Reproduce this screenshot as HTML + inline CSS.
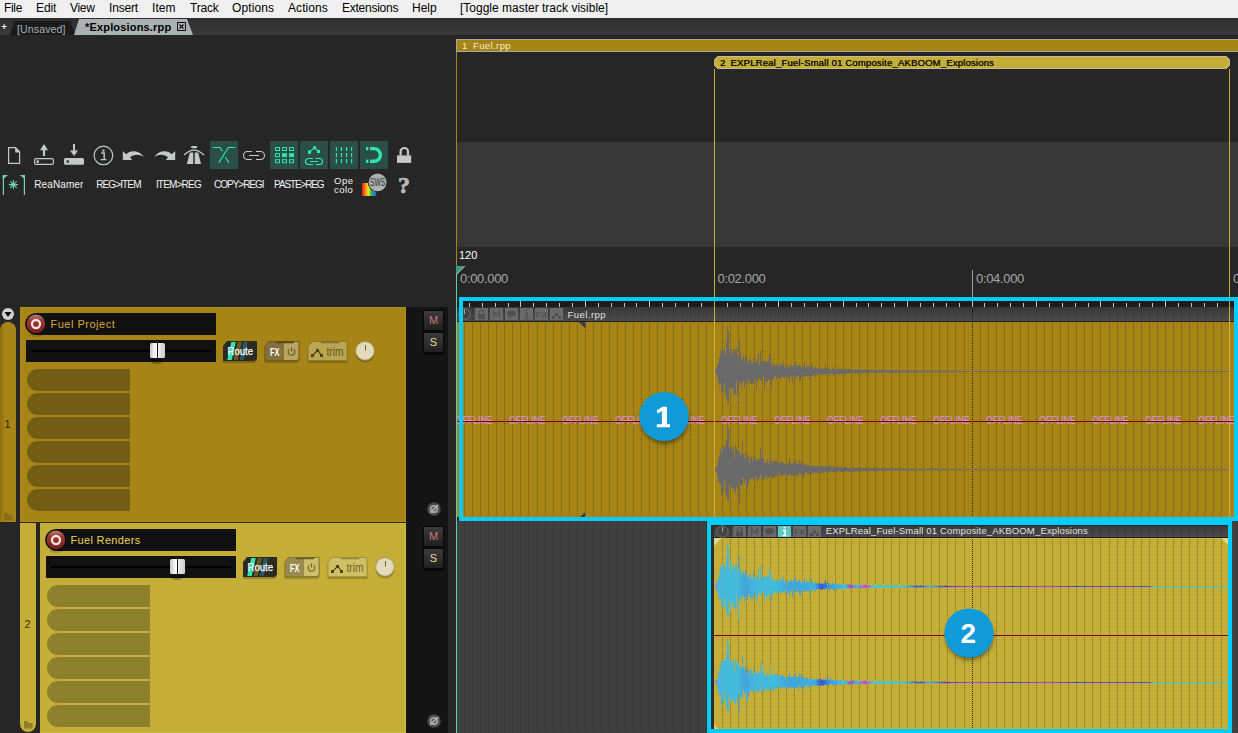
<!DOCTYPE html>
<html><head><meta charset="utf-8"><title>REAPER</title>
<style>
html,body{margin:0;padding:0;}
body{width:1238px;height:733px;overflow:hidden;background:#262626;position:relative;font-family:"Liberation Sans",sans-serif;}
.a{position:absolute;}
.menubar{left:0;top:0;width:1238px;height:18px;background:#f0f0f0;}
.menubar span{position:absolute;top:1px;font-size:12px;line-height:14px;color:#000;white-space:nowrap;}
.tabbar{left:0;top:18px;width:1238px;height:17px;background:linear-gradient(#2e2e2e,#3a3a3a);}
.tbl{position:absolute;color:#f2f2f2;font-size:10px;line-height:11px;white-space:nowrap;text-align:center;}
.slot{position:absolute;width:103px;height:22px;border-radius:11px 0 0 11px;}
.t1 .slot{background:#735c14;}
.t2 .slot{background:#8e7f2c;}
.box{position:absolute;background:#111;}
.btnms{position:absolute;width:21px;height:21px;background:linear-gradient(#3c3c3c,#202020);border:1px solid #080808;box-sizing:border-box;font-size:11px;line-height:19px;text-align:center;box-shadow:0 2px 0 #080808;}
.ico{position:absolute;width:13px;height:12px;background:#6a6a6a;}
</style></head><body>
<div class="a menubar"><span style="left:4px;letter-spacing:-0.32px">File</span><span style="left:36px;letter-spacing:-0.12px">Edit</span><span style="left:70px;letter-spacing:-0.3px">View</span><span style="left:109px;letter-spacing:-0.18px">Insert</span><span style="left:152px;letter-spacing:0.07px">Item</span><span style="left:190px;letter-spacing:-0.2px">Track</span><span style="left:232px;letter-spacing:0.11px">Options</span><span style="left:288px;letter-spacing:0.07px">Actions</span><span style="left:342px;letter-spacing:-0.25px">Extensions</span><span style="left:412px;letter-spacing:0px">Help</span><span style="left:460px;letter-spacing:0px">[Toggle master track visible]</span></div><div class="a tabbar"></div><div class="a" style="left:1.500px;top:21px;color:#fff;font-size:9px;line-height:12px;font-weight:bold">+</div><svg class="a" style="left:0;top:18px" width="200" height="17"><polygon points="9.500,17 15,3 70,3 75.500,17" fill="#1b1b1b"/><polygon points="74,17 79,1 187,1 193,17" fill="#a9b1b1"/><rect x="177.5" y="4.5" width="8" height="8" fill="none" stroke="#111" stroke-width="1"/><path d="M179.5 6.5l4 4M183.5 6.5l-4 4" stroke="#111" stroke-width="1.2"/></svg><div class="a" id="tab1" style="left:17px;top:23px;color:#a6b2ba;font-size:10.500px;letter-spacing:0.150px;line-height:12px;white-space:nowrap">[Unsaved]</div><div class="a" id="tab2" style="left:85px;top:21px;color:#000;font-size:11px;line-height:12px;font-weight:bold;white-space:nowrap;letter-spacing:0.170px">*Explosions.rpp</div><svg class="a" style="left:0;top:140px" width="420" height="60" viewBox="0 0 420 60"><path d="M8.600 7.600h7l4 4.200v11.600h-11z" fill="none" stroke="#c3c9c7" stroke-width="1.200"/><path d="M15.200 7.400v5h4.800z" fill="#c3c9c7"/><rect x="34.600" y="18.600" width="18.800" height="5.800" rx="1.500" fill="none" stroke="#c3c9c7" stroke-width="1.200"/><rect x="36.500" y="20.400" width="2.500" height="2.400" fill="#c3c9c7"/><path d="M44 16V9.500" stroke="#c3c9c7" stroke-width="2.200"/><path d="M40 10.300l4-6.300 4 6.300z" fill="#c3c9c7"/><rect x="64" y="18" width="20" height="6.800" rx="1.500" fill="#c3c9c7"/><rect x="66.500" y="20.300" width="2.500" height="2.400" fill="#3a3a3a"/><path d="M74 4v7.500" stroke="#c3c9c7" stroke-width="2"/><path d="M70 10.600l4 5.400 4-5.400z" fill="#c3c9c7"/><circle cx="103.400" cy="15.400" r="9.300" fill="none" stroke="#c3c9c7" stroke-width="1.200"/><path d="M101.300 13h2.900v6.500M100.600 19.600h5.800" fill="none" stroke="#c3c9c7" stroke-width="1.400"/><rect x="102.400" y="9.600" width="2.100" height="2.100" fill="#c3c9c7"/><path d="M122.800 11L126.200 14.200C130 10.300 138 9.300 144 17C139 13.800 133.500 14 130 17.200L132.200 20L122.800 20Z" fill="#c3c9c7"/><path d="M122.800 11L126.200 14.200C130 10.300 138 9.300 144 17C139 13.800 133.500 14 130 17.200L132.200 20L122.800 20Z" fill="#c3c9c7" transform="translate(298,0) scale(-1,1)"/><path d="M184 15Q194 5.200 204 15" fill="none" stroke="#c3c9c7" stroke-width="1.300"/><path d="M189.800 12.600h8.400l2.800 11.400h-14.100z" fill="#c3c9c7"/><rect x="193.300" y="12" width="1.400" height="12" fill="#1a1a1a"/><rect x="191.300" y="6" width="5.700" height="2.200" rx="0.500" fill="#c3c9c7"/><rect x="210" y="1" width="28" height="28" fill="#2b4f45"/><path d="M213 7.500H220L222.400 11.300M225.200 17L229 22.900M235 7.500H228.400L218.700 22.900" fill="none" stroke="#2de6b0" stroke-width="1.100"/><path d="M251.800 11.500H247.500a4 4 0 0 0 0 8H251.800M256 11.500H260.500a4 4 0 0 1 0 8H256M249 15.500H259" fill="none" stroke="#c8c8c8" stroke-width="1.100"/><rect x="270" y="1" width="28" height="28" fill="#2b4f45"/><rect x="275.5" y="7.5" width="4" height="3" fill="none" stroke="#2de6b0" stroke-width="1"/><rect x="282.5" y="7.5" width="4" height="3" fill="none" stroke="#2de6b0" stroke-width="1"/><rect x="289.5" y="7.5" width="4" height="3" fill="none" stroke="#2de6b0" stroke-width="1"/><rect x="275.5" y="13.6" width="4" height="3" fill="none" stroke="#2de6b0" stroke-width="1"/><rect x="282" y="13.1" width="5" height="4" fill="#2de6b0"/><rect x="289" y="13.1" width="5" height="4" fill="#2de6b0"/><rect x="275.5" y="19.7" width="4" height="3" fill="none" stroke="#2de6b0" stroke-width="1"/><rect x="282.5" y="19.7" width="4" height="3" fill="none" stroke="#2de6b0" stroke-width="1"/><rect x="289.5" y="19.7" width="4" height="3" fill="none" stroke="#2de6b0" stroke-width="1"/><rect x="300" y="1" width="28" height="28" fill="#2b4f45"/><path d="M309.500 12l5-4.300 4 3.800" fill="none" stroke="#2de6b0" stroke-width="1.100"/><rect x="308" y="10.400" width="3" height="3.500" fill="#2de6b0"/><rect x="313.100" y="6.200" width="3" height="3.200" fill="#2de6b0"/><rect x="317" y="9.900" width="3" height="3.200" fill="#2de6b0"/><path d="M313 18.500H308.500a3 3 0 0 0 0 6H313M315.700 18.500H319.500a3 3 0 0 1 0 6H315.700M310 21.500H318" fill="none" stroke="#2de6b0" stroke-width="1.100"/><rect x="330" y="1" width="28" height="28" fill="#2b4f45"/><path d="M336.4 6.900v16.400" stroke="#2de6b0" stroke-width="1.200" stroke-dasharray="4.200 1.900"/><path d="M341.47 6.900v16.400" stroke="#2de6b0" stroke-width="1.200" stroke-dasharray="4.200 1.900"/><path d="M346.54 6.900v16.400" stroke="#2de6b0" stroke-width="1.200" stroke-dasharray="4.200 1.900"/><path d="M351.61 6.900v16.400" stroke="#2de6b0" stroke-width="1.200" stroke-dasharray="4.200 1.900"/><rect x="360" y="1" width="28" height="28" fill="#2b4f45"/><path d="M370 8.600H374A6.350 6.350 0 0 1 374 21.300H370" fill="none" stroke="#2de6b0" stroke-width="3.400"/><rect x="366" y="6.900" width="2.300" height="3.400" fill="#2de6b0"/><rect x="366" y="19.600" width="2.300" height="3.400" fill="#2de6b0"/><rect x="397" y="15.400" width="14.200" height="7.500" fill="#c3c9c7"/><path d="M400.600 15.500V11.700A3.700 3.700 0 0 1 408 11.700V15.500" fill="none" stroke="#c3c9c7" stroke-width="2.200"/><path d="M3.400 55v-20M24.400 55v-20" stroke="#6fd6b4" stroke-width="1.200"/><path d="M2.800 35h5.200l-5.200 4.200zM25 35h-5.200l5.200 4.200z" fill="#6fd6b4"/><path d="M13.400 40v9.200M8.800 44.600h9.200M10.200 41.400l6.400 6.400M16.600 41.400l-6.400 6.400" stroke="#6fd6b4" stroke-width="1.100"/><circle cx="13.400" cy="44.600" r="1.800" fill="#6fd6b4"/><defs><linearGradient id="rb" x1="0" x2="1" y1="0" y2="0"><stop offset="0" stop-color="#e81818"/><stop offset="0.250" stop-color="#f89018"/><stop offset="0.450" stop-color="#f0e828"/><stop offset="0.650" stop-color="#30c040"/><stop offset="0.850" stop-color="#2088e8"/><stop offset="1" stop-color="#2858d8"/></linearGradient></defs><rect x="362" y="43" width="14.200" height="13" fill="url(#rb)"/><circle cx="377.600" cy="42.400" r="9.800" fill="#262626"/><circle cx="377.600" cy="42.400" r="8.900" fill="#adb1b1"/><text x="377.600" y="46" font-size="10" text-anchor="middle" fill="#2c2c2c" font-family="Liberation Sans,sans-serif" textLength="15" lengthAdjust="spacingAndGlyphs">SWS</text><text x="404" y="53" font-size="24" font-weight="bold" text-anchor="middle" fill="#b9b9b9" stroke="#b9b9b9" stroke-width="0.700" font-family="Liberation Serif,serif">?</text></svg><div class="tbl" style="left:34.2px;top:179px;font-size:10px;letter-spacing:0.119px;text-align:left">ReaNamer</div><div class="tbl" style="left:96.2px;top:179px;font-size:10px;letter-spacing:-0.875px;text-align:left">REG&gt;ITEM</div><div class="tbl" style="left:155.9px;top:179px;font-size:10px;letter-spacing:-0.800px;text-align:left">ITEM&gt;REG</div><div class="tbl" style="left:214.1px;top:179px;font-size:10px;letter-spacing:-1.025px;text-align:left">COPY&gt;REGI</div><div class="tbl" style="left:274.1px;top:179px;font-size:10px;letter-spacing:-1.128px;text-align:left">PASTE&gt;REG</div><div class="tbl" style="left:334px;top:175.500px;font-size:9.500px;line-height:9px;text-align:left;letter-spacing:0.493px">Ope<br>colo</div><div class="a" style="left:457px;top:142px;width:781px;height:105px;background:#383838"></div><div class="a" style="left:456px;top:39px;width:782px;height:13px;background:#a68416;border:1px solid #a8a8a0;border-right:none;box-sizing:border-box"></div><div class="a" style="left:462px;top:39.500px;font-size:9.500px;line-height:11px;color:#f6eecb;white-space:pre;letter-spacing:0.403px">1<span style="word-spacing:2.200px"> </span>Fuel.rpp</div><div class="a" style="left:456px;top:52px;width:1px;height:215px;background:#a68416"></div><svg class="a" style="left:713px;top:55px" width="520" height="16"><polygon points="1.500,4.500 4.500,1.500 513.500,1.500 516.500,4.500 516.500,10.500 513.500,13.500 4.500,13.500 1.500,10.500" fill="#c4ae38" stroke="#c2bd98" stroke-width="1"/></svg><div class="a" style="left:720px;top:56.500px;font-size:9.500px;line-height:11px;color:#120e00;white-space:pre;letter-spacing:0.190px;text-shadow:0.3px 0 0 #120e00">2<span style="word-spacing:2.200px"> </span>EXPLReal_Fuel-Small 01 Composite_AKBOOM_Explosions</div><div class="a" style="left:714px;top:69px;width:1px;height:228px;background:#c4ae38"></div><div class="a" style="left:1229px;top:69px;width:1px;height:228px;background:#c4ae38"></div><div class="a" style="left:459px;top:250px;font-size:11px;line-height:11px;color:#fff">120</div><div class="a" style="left:460px;top:272px;font-size:13px;line-height:14px;color:#a6a6a6;white-space:nowrap;letter-spacing:-0.325px">0:00.000</div><div class="a" style="left:717.5px;top:272px;font-size:13px;line-height:14px;color:#a6a6a6;white-space:nowrap;letter-spacing:-0.325px">0:02.000</div><div class="a" style="left:976px;top:272px;font-size:13px;line-height:14px;color:#a6a6a6;white-space:nowrap;letter-spacing:-0.325px">0:04.000</div><div class="a" style="left:1233px;top:272px;font-size:13px;line-height:14px;color:#a6a6a6;white-space:nowrap;letter-spacing:-0.325px">0:06.000</div><div class="a" style="left:972px;top:270px;width:1px;height:28px;background:#a0a0a0"></div><div class="a" style="left:456px;top:266px;width:1px;height:467px;background:#5fd0b0"></div><svg class="a" style="left:456px;top:266px" width="10" height="10"><polygon points="0,0 9,0 0,9" fill="#3d9a80"/><path d="M9 0L0 9" stroke="#c8d8d0" stroke-width="0.800"/></svg><svg class="a" style="left:0;top:0" width="1238" height="733" viewBox="0 0 1238 733"><defs><linearGradient id="wv" gradientUnits="userSpaceOnUse" x1="715" x2="1228" y1="0" y2="0"><stop offset="0.0000" stop-color="#a070e0"/><stop offset="0.0058" stop-color="#48b8dc"/><stop offset="0.0429" stop-color="#44bcd8"/><stop offset="0.0585" stop-color="#43a4dc"/><stop offset="0.0780" stop-color="#44b8dc"/><stop offset="0.1170" stop-color="#40bcdc"/><stop offset="0.1462" stop-color="#40a4dc"/><stop offset="0.1949" stop-color="#3cb0e0"/><stop offset="0.2066" stop-color="#3058dc"/><stop offset="0.2261" stop-color="#38a0e0"/><stop offset="0.2534" stop-color="#40c4dc"/><stop offset="0.2651" stop-color="#a048d8"/><stop offset="0.2768" stop-color="#40c0dc"/><stop offset="0.2924" stop-color="#d040d8"/><stop offset="0.3080" stop-color="#40c8d8"/><stop offset="0.3704" stop-color="#38c8d8"/><stop offset="0.3996" stop-color="#4848d8"/><stop offset="0.4191" stop-color="#38c0d8"/><stop offset="0.4483" stop-color="#5040d8"/><stop offset="0.5068" stop-color="#c040d0"/><stop offset="0.5848" stop-color="#4848d8"/><stop offset="0.6433" stop-color="#c040d0"/><stop offset="0.7018" stop-color="#4848d8"/><stop offset="0.7797" stop-color="#7050d4"/><stop offset="0.8421" stop-color="#5050d8"/><stop offset="0.8577" stop-color="#38d0d0"/><stop offset="1.0000" stop-color="#38d0d0"/></linearGradient></defs><rect x="457" y="297" width="781" height="10" fill="#262626"/><rect x="457" y="301" width="781" height="6" fill="#1c1c1c"/><linearGradient id="hg1" x1="0" x2="0" y1="0" y2="1"><stop offset="0" stop-color="#383838"/><stop offset="1" stop-color="#4c4c4c"/></linearGradient><rect x="457" y="307" width="777" height="14" fill="url(#hg1)"/><rect x="457" y="321" width="777" height="1" fill="#1c1c22"/><rect x="457" y="322" width="777" height="195" fill="#a68416"/><rect x="457" y="516" width="777" height="1" fill="#b4860e"/><rect x="457" y="521" width="781" height="212" fill="#404040"/><rect x="711" y="525" width="3" height="204" fill="#2e2c2c"/><rect x="714" y="525" width="514" height="12" fill="url(#hg1)"/><rect x="714" y="525" width="514" height="1" fill="#2a2424"/><rect x="714" y="537" width="514" height="1" fill="#1c1c22"/><rect x="714" y="538" width="514" height="191" fill="#c4ae38"/><rect x="714" y="538" width="514" height="1" fill="#ccb63e"/><g shape-rendering="crispEdges" fill="none" stroke-width="1" stroke-dasharray="1 1"><path d="M464.5 307V321M472.5 307V321M480.5 307V321M488.5 307V321M496.5 307V321M504.5 307V321M512.5 307V321M520.5 307V321M528.5 307V321M537.5 307V321M545.5 307V321M553.5 307V321M561.5 307V321M569.5 307V321M577.5 307V321M585.5 307V321M593.5 307V321M601.5 307V321M609.5 307V321M617.5 307V321M625.5 307V321M633.5 307V321M641.5 307V321M649.5 307V321M657.5 307V321M665.5 307V321M673.5 307V321M682.5 307V321M690.5 307V321M698.5 307V321M706.5 307V321M722.5 307V321M730.5 307V321M738.5 307V321M746.5 307V321M754.5 307V321M762.5 307V321M770.5 307V321M778.5 307V321M786.5 307V321M794.5 307V321M802.5 307V321M810.5 307V321M819.5 307V321M827.5 307V321M835.5 307V321M843.5 307V321M851.5 307V321M859.5 307V321M867.5 307V321M875.5 307V321M883.5 307V321M891.5 307V321M899.5 307V321M907.5 307V321M915.5 307V321M923.5 307V321M931.5 307V321M939.5 307V321M947.5 307V321M955.5 307V321M964.5 307V321M980.5 307V321M988.5 307V321M996.5 307V321M1004.5 307V321M1012.5 307V321M1020.5 307V321M1028.5 307V321M1036.5 307V321M1044.5 307V321M1052.5 307V321M1060.5 307V321M1068.5 307V321M1076.5 307V321M1084.5 307V321M1092.5 307V321M1100.5 307V321M1109.5 307V321M1117.5 307V321M1125.5 307V321M1133.5 307V321M1141.5 307V321M1149.5 307V321M1157.5 307V321M1165.5 307V321M1173.5 307V321M1181.5 307V321M1189.5 307V321M1197.5 307V321M1205.5 307V321M1213.5 307V321M1221.5 307V321" stroke="#343434"/><path d="M464.5 323V517M472.5 323V517M480.5 323V517M488.5 323V517M496.5 323V517M504.5 323V517M512.5 323V517M520.5 323V517M528.5 323V517M537.5 323V517M545.5 323V517M553.5 323V517M561.5 323V517M569.5 323V517M577.5 323V517M585.5 323V517M593.5 323V517M601.5 323V517M609.5 323V517M617.5 323V517M625.5 323V517M633.5 323V517M641.5 323V517M649.5 323V517M657.5 323V517M665.5 323V517M673.5 323V517M682.5 323V517M690.5 323V517M698.5 323V517M706.5 323V517M722.5 323V517M730.5 323V517M738.5 323V517M746.5 323V517M754.5 323V517M762.5 323V517M770.5 323V517M778.5 323V517M786.5 323V517M794.5 323V517M802.5 323V517M810.5 323V517M819.5 323V517M827.5 323V517M835.5 323V517M843.5 323V517M851.5 323V517M859.5 323V517M867.5 323V517M875.5 323V517M883.5 323V517M891.5 323V517M899.5 323V517M907.5 323V517M915.5 323V517M923.5 323V517M931.5 323V517M939.5 323V517M947.5 323V517M955.5 323V517M964.5 323V517M980.5 323V517M988.5 323V517M996.5 323V517M1004.5 323V517M1012.5 323V517M1020.5 323V517M1028.5 323V517M1036.5 323V517M1044.5 323V517M1052.5 323V517M1060.5 323V517M1068.5 323V517M1076.5 323V517M1084.5 323V517M1092.5 323V517M1100.5 323V517M1109.5 323V517M1117.5 323V517M1125.5 323V517M1133.5 323V517M1141.5 323V517M1149.5 323V517M1157.5 323V517M1165.5 323V517M1173.5 323V517M1181.5 323V517M1189.5 323V517M1197.5 323V517M1205.5 323V517M1213.5 323V517M1221.5 323V517" stroke="#695410"/><path d="M464.5 521V733M472.5 521V733M480.5 521V733M488.5 521V733M496.5 521V733M504.5 521V733M512.5 521V733M520.5 521V733M528.5 521V733M537.5 521V733M545.5 521V733M553.5 521V733M561.5 521V733M569.5 521V733M577.5 521V733M585.5 521V733M593.5 521V733M601.5 521V733M609.5 521V733M617.5 521V733M625.5 521V733M633.5 521V733M641.5 521V733M649.5 521V733M657.5 521V733M665.5 521V733M673.5 521V733M682.5 521V733M690.5 521V733M698.5 521V733M706.5 521V733M1237.5 521V733" stroke="#2c2c2c"/><path d="M722.5 525V537M730.5 525V537M738.5 525V537M746.5 525V537M754.5 525V537M762.5 525V537M770.5 525V537M778.5 525V537M786.5 525V537M794.5 525V537M802.5 525V537M810.5 525V537M819.5 525V537M827.5 525V537M835.5 525V537M843.5 525V537M851.5 525V537M859.5 525V537M867.5 525V537M875.5 525V537M883.5 525V537M891.5 525V537M899.5 525V537M907.5 525V537M915.5 525V537M923.5 525V537M931.5 525V537M939.5 525V537M947.5 525V537M955.5 525V537M964.5 525V537M980.5 525V537M988.5 525V537M996.5 525V537M1004.5 525V537M1012.5 525V537M1020.5 525V537M1028.5 525V537M1036.5 525V537M1044.5 525V537M1052.5 525V537M1060.5 525V537M1068.5 525V537M1076.5 525V537M1084.5 525V537M1092.5 525V537M1100.5 525V537M1109.5 525V537M1117.5 525V537M1125.5 525V537M1133.5 525V537M1141.5 525V537M1149.5 525V537M1157.5 525V537M1165.5 525V537M1173.5 525V537M1181.5 525V537M1189.5 525V537M1197.5 525V537M1205.5 525V537M1213.5 525V537M1221.5 525V537" stroke="#2c2c2c"/><path d="M722.5 539V729M730.5 539V729M738.5 539V729M746.5 539V729M754.5 539V729M762.5 539V729M770.5 539V729M778.5 539V729M786.5 539V729M794.5 539V729M802.5 539V729M810.5 539V729M819.5 539V729M827.5 539V729M835.5 539V729M843.5 539V729M851.5 539V729M859.5 539V729M867.5 539V729M875.5 539V729M883.5 539V729M891.5 539V729M899.5 539V729M907.5 539V729M915.5 539V729M923.5 539V729M931.5 539V729M939.5 539V729M947.5 539V729M955.5 539V729M964.5 539V729M980.5 539V729M988.5 539V729M996.5 539V729M1004.5 539V729M1012.5 539V729M1020.5 539V729M1028.5 539V729M1036.5 539V729M1044.5 539V729M1052.5 539V729M1060.5 539V729M1068.5 539V729M1076.5 539V729M1084.5 539V729M1092.5 539V729M1100.5 539V729M1109.5 539V729M1117.5 539V729M1125.5 539V729M1133.5 539V729M1141.5 539V729M1149.5 539V729M1157.5 539V729M1165.5 539V729M1173.5 539V729M1181.5 539V729M1189.5 539V729M1197.5 539V729M1205.5 539V729M1213.5 539V729M1221.5 539V729" stroke="#796b1f"/><path d="M972.500 307V320M972.500 525V537" stroke="#161616"/><path d="M972.500 323V517" stroke="#2a2004"/><path d="M972.500 539V729" stroke="#2c2808"/></g><rect x="469" y="303" width="1" height="4" fill="#c4c4c4"/><rect x="482" y="303" width="1" height="4" fill="#c4c4c4"/><rect x="495" y="303" width="1" height="4" fill="#c4c4c4"/><rect x="508" y="303" width="1" height="4" fill="#c4c4c4"/><rect x="520" y="301" width="1" height="6" fill="#c4c4c4"/><rect x="533" y="303" width="1" height="4" fill="#c4c4c4"/><rect x="546" y="303" width="1" height="4" fill="#c4c4c4"/><rect x="559" y="303" width="1" height="4" fill="#c4c4c4"/><rect x="572" y="303" width="1" height="4" fill="#c4c4c4"/><rect x="585" y="301" width="1" height="6" fill="#c4c4c4"/><rect x="598" y="303" width="1" height="4" fill="#c4c4c4"/><rect x="611" y="303" width="1" height="4" fill="#c4c4c4"/><rect x="624" y="303" width="1" height="4" fill="#c4c4c4"/><rect x="636" y="303" width="1" height="4" fill="#c4c4c4"/><rect x="649" y="301" width="1" height="6" fill="#c4c4c4"/><rect x="662" y="303" width="1" height="4" fill="#c4c4c4"/><rect x="675" y="303" width="1" height="4" fill="#c4c4c4"/><rect x="688" y="303" width="1" height="4" fill="#c4c4c4"/><rect x="701" y="303" width="1" height="4" fill="#c4c4c4"/><rect x="714" y="301" width="1" height="6" fill="#c4c4c4"/><rect x="727" y="303" width="1" height="4" fill="#c4c4c4"/><rect x="740" y="303" width="1" height="4" fill="#c4c4c4"/><rect x="752" y="303" width="1" height="4" fill="#c4c4c4"/><rect x="765" y="303" width="1" height="4" fill="#c4c4c4"/><rect x="778" y="301" width="1" height="6" fill="#c4c4c4"/><rect x="791" y="303" width="1" height="4" fill="#c4c4c4"/><rect x="804" y="303" width="1" height="4" fill="#c4c4c4"/><rect x="817" y="303" width="1" height="4" fill="#c4c4c4"/><rect x="830" y="303" width="1" height="4" fill="#c4c4c4"/><rect x="843" y="301" width="1" height="6" fill="#c4c4c4"/><rect x="856" y="303" width="1" height="4" fill="#c4c4c4"/><rect x="868" y="303" width="1" height="4" fill="#c4c4c4"/><rect x="881" y="303" width="1" height="4" fill="#c4c4c4"/><rect x="894" y="303" width="1" height="4" fill="#c4c4c4"/><rect x="907" y="301" width="1" height="6" fill="#c4c4c4"/><rect x="920" y="303" width="1" height="4" fill="#c4c4c4"/><rect x="933" y="303" width="1" height="4" fill="#c4c4c4"/><rect x="946" y="303" width="1" height="4" fill="#c4c4c4"/><rect x="959" y="303" width="1" height="4" fill="#c4c4c4"/><rect x="972" y="301" width="1" height="6" fill="#c4c4c4"/><rect x="984" y="303" width="1" height="4" fill="#c4c4c4"/><rect x="997" y="303" width="1" height="4" fill="#c4c4c4"/><rect x="1010" y="303" width="1" height="4" fill="#c4c4c4"/><rect x="1023" y="303" width="1" height="4" fill="#c4c4c4"/><rect x="1036" y="301" width="1" height="6" fill="#c4c4c4"/><rect x="1049" y="303" width="1" height="4" fill="#c4c4c4"/><rect x="1062" y="303" width="1" height="4" fill="#c4c4c4"/><rect x="1075" y="303" width="1" height="4" fill="#c4c4c4"/><rect x="1088" y="303" width="1" height="4" fill="#c4c4c4"/><rect x="1100" y="301" width="1" height="6" fill="#c4c4c4"/><rect x="1113" y="303" width="1" height="4" fill="#c4c4c4"/><rect x="1126" y="303" width="1" height="4" fill="#c4c4c4"/><rect x="1139" y="303" width="1" height="4" fill="#c4c4c4"/><rect x="1152" y="303" width="1" height="4" fill="#c4c4c4"/><rect x="1165" y="301" width="1" height="6" fill="#c4c4c4"/><rect x="1178" y="303" width="1" height="4" fill="#c4c4c4"/><rect x="1191" y="303" width="1" height="4" fill="#c4c4c4"/><rect x="1204" y="303" width="1" height="4" fill="#c4c4c4"/><rect x="1217" y="303" width="1" height="4" fill="#c4c4c4"/><rect x="1229" y="301" width="1" height="6" fill="#c4c4c4"/><rect x="714" y="297" width="1" height="220" fill="#c8ae3c"/><rect x="1229" y="297" width="1" height="220" fill="#c8ae3c"/><path d="M715 369.9V369.9H716V367.8H717V365.6H718V362.8H719V358H720V350.1H721V353H722V347.9H723V350.1H724V349.7H725V354.9H726V341.5H727V326.5H728V330.5H729V351.9H730V346.5H731V349.2H732V355.1H733V349.5H734V352.6H735V349.5H736V347.9H737V355.4H738V353.3H739V339.7H740V353.7H741V361.8H742V357.2H743V356H744V359.7H745V355.4H746V357.4H747V360.8H748V363.4H749V358.8H750V360H751V362.9H752V362.7H753V358H754V364H755V359.7H756V362.5H757V361H758V353.3H759V365.2H760V350.5H761V361.2H762V365.9H763V360.1H764V361.2H765V361.4H766V361.2H767V360.9H768V361.2H769V353.6H770V355.5H771V362.9H772V366.8H773V362.9H774V365.2H775V365.7H776V364.6H777V366H778V363.4H779V366.7H780V364.3H781V365.3H782V364.8H783V361.3H784V367.8H785V364.5H786V368H787V367.8H788V365.1H789V366.9H790V365.1H791V365.2H792V366.2H793V365.3H794V364.8H795V361.5H796V367.2H797V365.6H798V365.2H799V365.4H800V366.4H801V368.4H802V366.1H803V366.3H804V363.4H805V367.7H806V366.4H807V366.5H808V366.3H809V367.3H810V367.4H811V363.5H812V366.8H813V368.8H814V367.8H815V367.1H816V368.6H817V367.8H818V368.1H819V368.3H820V369H821V368.2H822V368.9H823V368.8H824V367.7H825V364.9H826V368.2H827V369.9H828V368.1H829V368.8H830V369.9H831V369.5H832V367.2H833V369H834V369H835V368.6H836V369.2H837V370.2H838V368.7H839V369.2H840V368.8H841V369.4H842V369H843V370.1H844V369.2H845V369.2H846V369.3H847V369.4H848V369H849V369.3H850V369.1H851V369.5H852V369.9H853V370.4H854V369.8H855V370H856V369.7H857V369.4H858V369.4H859V369.6H860V369.8H861V370.5H862V370.3H863V370.3H864V369.8H865V369.6H866V369.9H867V370.1H868V369.9H869V370.2H870V370.2H871V370.3H872V370.4H873V370.2H874V369.9H875V369.7H876V370.6H877V370.2H878V369.8H879V370.1H880V370H881V369.8H882V370.1H883V370.1H884V370.5H885V370.2H886V370.3H887V370.3H888V370.2H889V370.1H890V370H891V370.1H892V370.6H893V370.1H894V370.4H895V370.2H896V370.3H897V370.2H898V370.5H899V370.1H900V370.8H901V370.5H902V370.3H903V370.3H904V370.7H905V370.4H906V370.5H907V370.6H908V370.3H909V370.8H910V370.3H911V370.3H912V370.5H913V370.3H914V370.4H915V370.6H916V370.3H917V370.5H918V370.8H919V370.8H920V370.5H921V370.4H922V370.4H923V370.7H924V370.8H925V370.4H926V370.7H927V370.6H928V370.6H929V370.4H930V370.4H931V370.4H932V370.4H933V370.7H934V370.4H935V370.7H936V370.7H937V370.7H938V370.8H939V370.5H940V370.5H941V370.8H942V370.5H943V371H944V370.7H945V370.5H946V370.6H947V370.7H948V371H949V370.7H950V371H951V371H952V370.8H953V371H954V370.9H955V370.9H956V370.8H957V370.9H958V370.9H959V370.8H960V370.9H961V370.9H962V370.9H963V370.9H964V371H965V370.9H966V371H967V371H968V371H969V371H970V371H971V371H972V371H973V371H974V371H975V371H976V371H977V371H978V371H979V371H980V371H981V371H982V371H983V370.9H984V371H985V370.9H986V371H987V371H988V371H989V371H990V371H991V371H992V371H993V371H994V371H995V371H996V371H997V371H998V370.9H999V371H1000V371H1001V371H1002V371H1003V370.9H1004V371H1005V371H1006V371H1007V370.9H1008V370.9H1009V371H1010V370.9H1011V371H1012V371H1013V371H1014V371H1015V371H1016V371H1017V371H1018V371H1019V371H1020V371H1021V371H1022V371H1023V371H1024V371H1025V371H1026V371H1027V371H1028V371H1029V371H1030V371H1031V371H1032V370.9H1033V371H1034V371H1035V371H1036V371H1037V371H1038V371H1039V371H1040V371H1041V371H1042V370.9H1043V371H1044V371H1045V371H1046V371H1047V371H1048V370.9H1049V371H1050V371H1051V371H1052V371H1053V371H1054V371H1055V371H1056V371H1057V371H1058V371H1059V370.9H1060V371H1061V371H1062V371H1063V371H1064V371H1065V371H1066V371H1067V371H1068V371H1069V371H1070V371H1071V371H1072V371H1073V371H1074V371H1075V371H1076V371H1077V371H1078V371H1079V370.9H1080V371H1081V371H1082V371H1083V371H1084V371H1085V371H1086V371H1087V371H1088V371H1089V371H1090V371H1091V371H1092V371H1093V371H1094V371H1095V371H1096V371H1097V371H1098V371H1099V371H1100V371H1101V371H1102V371H1103V371H1104V371H1105V371H1106V371H1107V371H1108V371H1109V371H1110V371H1111V371H1112V371H1113V371H1114V371H1115V371H1116V371H1117V371H1118V371H1119V371H1120V371H1121V371H1122V371H1123V371H1124V371H1125V371H1126V371H1127V371H1128V371H1129V371H1130V371H1131V371H1132V371H1133V371H1134V371H1135V371H1136V371H1137V371H1138V371H1139V371H1140V371H1141V371H1142V371H1143V371H1144V371H1145V371H1146V371H1147V371H1148V371H1149V371H1150V371H1151V371H1152V371H1153V371H1154V371H1155V371H1156V371H1157V371H1158V371H1159V371H1160V371H1161V371H1162V371H1163V371H1164V371H1165V371H1166V371H1167V371H1168V371H1169V371H1170V371H1171V371H1172V371H1173V371H1174V371H1175V371H1176V371H1177V371H1178V371H1179V371H1180V371H1181V371H1182V371H1183V371H1184V371H1185V371H1186V371H1187V371H1188V371H1189V371H1190V371H1191V371H1192V371H1193V371H1194V371H1195V371H1196V371H1197V371H1198V371H1199V371H1200V371H1201V371H1202V371H1203V371H1204V371H1205V371H1206V371H1207V371H1208V371H1209V371H1210V371H1211V371H1212V371H1213V371H1214V371H1215V371H1216V371H1217V371H1218V371H1219V371H1220V371H1221V371H1222V371H1223V371H1224V371H1225V371H1226V371H1227V371H1228V371H1229V372H1228V372H1227V372H1226V372H1225V372H1224V372H1223V372H1222V372H1221V372H1220V372H1219V372H1218V372H1217V372H1216V372H1215V372H1214V372H1213V372H1212V372H1211V372H1210V372H1209V372H1208V372H1207V372H1206V372H1205V372H1204V372H1203V372H1202V372H1201V372H1200V372H1199V372H1198V372H1197V372H1196V372H1195V372H1194V372H1193V372H1192V372H1191V372H1190V372H1189V372H1188V372H1187V372H1186V372H1185V372H1184V372H1183V372H1182V372H1181V372H1180V372H1179V372H1178V372H1177V372H1176V372H1175V372H1174V372H1173V372H1172V372H1171V372H1170V372H1169V372H1168V372H1167V372H1166V372H1165V372H1164V372H1163V372H1162V372H1161V372H1160V372H1159V372H1158V372H1157V372H1156V372H1155V372H1154V372H1153V372H1152V372H1151V372H1150V372H1149V372H1148V372H1147V372H1146V372H1145V372H1144V372H1143V372H1142V372H1141V372H1140V372H1139V372H1138V372H1137V372H1136V372H1135V372H1134V372H1133V372H1132V372H1131V372H1130V372H1129V372H1128V372H1127V372H1126V372H1125V372H1124V372H1123V372H1122V372H1121V372H1120V372H1119V372H1118V372H1117V372H1116V372H1115V372H1114V372H1113V372H1112V372H1111V372H1110V372H1109V372H1108V372H1107V372H1106V372H1105V372H1104V372H1103V372H1102V372H1101V372H1100V372H1099V372H1098V372H1097V372H1096V372H1095V372H1094V372H1093V372H1092V372H1091V372H1090V372H1089V372H1088V372H1087V372H1086V372H1085V372H1084V372H1083V372H1082V372H1081V372H1080V372H1079V372H1078V372H1077V372H1076V372H1075V372H1074V372H1073V372H1072V372H1071V372H1070V372H1069V372H1068V372H1067V372H1066V372H1065V372H1064V372H1063V372H1062V372H1061V372H1060V372H1059V372H1058V372H1057V372H1056V372H1055V372H1054V372H1053V372H1052V372H1051V372H1050V372H1049V372H1048V372H1047V372H1046V372H1045V372H1044V372H1043V372H1042V372H1041V372H1040V372H1039V372H1038V372H1037V372H1036V372H1035V372H1034V372H1033V372H1032V372H1031V372H1030V372H1029V372H1028V372H1027V372H1026V372H1025V372H1024V372H1023V372H1022V372H1021V372H1020V372H1019V372H1018V372H1017V372H1016V372H1015V372H1014V372H1013V372H1012V372H1011V372H1010V372H1009V372H1008V372H1007V372H1006V372H1005V372H1004V372H1003V372H1002V372H1001V372H1000V372.1H999V372H998V372H997V372H996V372H995V372H994V372H993V372H992V372.1H991V372H990V372H989V372.1H988V372H987V372.1H986V372H985V372H984V372H983V372H982V372H981V372H980V372H979V372H978V372H977V372H976V372H975V372H974V372H973V372H972V372H971V372.1H970V372H969V372H968V372.1H967V372H966V372H965V372H964V372H963V372.1H962V372.1H961V372.1H960V372H959V372.1H958V372.1H957V372.1H956V372H955V372.2H954V372.2H953V372H952V372.2H951V372.2H950V372.3H949V372H948V372.3H947V372H946V372.3H945V372.3H944V372.3H943V372.2H942V372.4H941V372.4H940V372.4H939V372.4H938V372.3H937V372.3H936V372.3H935V372.5H934V372.3H933V372.3H932V372.4H931V372.6H930V372.4H929V372.1H928V372.5H927V372.2H926V372.5H925V372.3H924V372.5H923V372.1H922V372.3H921V372.4H920V372.1H919V372.7H918V372.4H917V372.7H916V372.5H915V372.7H914V372.4H913V372.3H912V372.3H911V372.6H910V372.2H909V372.7H908V372.4H907V372.5H906V372.6H905V372.7H904V372.2H903V372.2H902V372.5H901V372.2H900V372.8H899V372.9H898V372.4H897V372.7H896V372.7H895V372.5H894V372.7H893V372.9H892V372.5H891V372.9H890V372.7H889V372.6H888V372.5H887V372.8H886V372.4H885V372.3H884V372.7H883V372.4H882V373H881V372.8H880V373.1H879V372.6H878V372.8H877V373.1H876V373.1H875V372.3H874V373.1H873V373.1H872V372.4H871V372.3H870V373.1H869V373H868V372.7H867V373H866V372.9H865V372.4H864V373H863V373H862V373.4H861V373.3H860V372.5H859V373.2H858V373.2H857V373.2H856V373.5H855V372.7H854V372.9H853V373.2H852V373.5H851V372.5H850V373.6H849V373.5H848V373.3H847V373.5H846V373.3H845V373.7H844V375.1H843V373.9H842V374H841V373.9H840V374.2H839V373.9H838V374.2H837V373.3H836V373.3H835V376.3H834V374.3H833V374.5H832V373.5H831V374.1H830V375.7H829V373.4H828V373.6H827V373.5H826V373.9H825V374.9H824V374.1H823V374.9H822V375.1H821V374H820V374.4H819V374.2H818V373.8H817V375.2H816V377.3H815V374.6H814V374.9H813V375.9H812V375.6H811V375.1H810V379.9H809V375.5H808V376.4H807V375.8H806V376.2H805V376.8H804V376.7H803V374.8H802V376.8H801V381.1H800V380.3H799V376.5H798V375.5H797V377.2H796V377.8H795V376.3H794V375.3H793V383H792V377H791V375.7H790V381.7H789V378H788V377.6H787V378.2H786V374.7H785V378H784V377.2H783V377.5H782V376.6H781V379H780V377.8H779V377.5H778V377.9H777V379.7H776V376.8H775V375.4H774V378.9H773V379.5H772V387.3H771V380.5H770V380.1H769V380.1H768V381.4H767V381.7H766V381.8H765V388H764V376.5H763V376.5H762V381.5H761V379.9H760V378.7H759V379.1H758V382.9H757V388.3H756V379.9H755V377.7H754V384H753V383.5H752V384.6H751V383H750V382H749V379.5H748V385.3H747V380.1H746V381.8H745V387.8H744V381.2H743V382.5H742V388.2H741V382.1H740V385.2H739V405.7H738V394.5H737V380.8H736V394.9H735V394H734V393.2H733V388H732V388.3H731V396.5H730V387.8H729V403.5H728V402.5H727V398.5H726V394.3H725V383.6H724V391.6H723V392.4H722V391.8H721V383.3H720V385.3H719V382.3H718V377.4H717V374.4H716V373.1H715Z" fill="#6a6a6a"/><path d="M715 467.9V467.9H716V466.1H717V466.3H718V459.9H719V455.6H720V447.9H721V454.1H722V448.2H723V447.4H724V445.9H725V445.2H726V439.5H727V424.5H728V428.5H729V448.1H730V447.3H731V446.1H732V450.4H733V447.5H734V457.7H735V444.8H736V447.6H737V451.1H738V449.3H739V452.4H740V454.5H741V455.3H742V442.6H743V454.1H744V457.6H745V452.9H746V459.2H747V455H748V456.3H749V462.6H750V457H751V457.3H752V461H753V456.1H754V460.8H755V457.8H756V460.9H757V458.6H758V460H759V459.2H760V448.5H761V458.5H762V451.8H763V458.2H764V462.9H765V462H766V462.9H767V459.5H768V464.4H769V460.2H770V453.5H771V463H772V461.5H773V461.3H774V460.6H775V461.1H776V460.7H777V461.7H778V463.6H779V464H780V461.7H781V461.9H782V462.1H783V462.9H784V463.8H785V464.7H786V465.7H787V464.1H788V462.5H789V459.3H790V463.1H791V464.5H792V463.3H793V463.5H794V464.1H795V459.5H796V464.2H797V463.7H798V463.7H799V460.4H800V464.1H801V460.9H802V464.8H803V464.7H804V463.9H805V465.4H806V464.7H807V464.7H808V465.6H809V466.3H810V466.2H811V465.5H812V465.8H813V466.6H814V466.1H815V466.3H816V466.2H817V466.3H818V465.8H819V467.3H820V465.7H821V466.4H822V467H823V466.5H824V466.7H825V466.1H826V466.6H827V463H828V466.9H829V466.3H830V464.9H831V467.5H832V466.9H833V467.4H834V466.9H835V466.7H836V467H837V467.6H838V467.2H839V467.3H840V467.1H841V467.2H842V468.2H843V466.8H844V467.1H845V467H846V467.6H847V468.1H848V468.3H849V468.1H850V468.1H851V467.6H852V467.3H853V467.2H854V467.8H855V468H856V467.6H857V467.5H858V468H859V467.9H860V468.6H861V468H862V467.9H863V468.1H864V467.9H865V467.6H866V468.2H867V468.2H868V468.5H869V467.7H870V467.9H871V468.4H872V468.6H873V468.1H874V467.9H875V467.9H876V467.8H877V468.6H878V467.9H879V468.1H880V468.4H881V468.6H882V467.9H883V468.2H884V468.2H885V468.1H886V468H887V468.2H888V468.3H889V468.6H890V468.3H891V468.2H892V468H893V468.3H894V468.4H895V468H896V468.2H897V468.6H898V468.6H899V468.3H900V468.6H901V468.4H902V468.6H903V468.1H904V468.3H905V468.7H906V468.4H907V468.7H908V468.4H909V468.2H910V468.8H911V468.6H912V468.2H913V468.5H914V468.3H915V468.7H916V468.3H917V468.8H918V469H919V468.8H920V468.7H921V468.3H922V468.5H923V468.7H924V468.4H925V468.9H926V468.3H927V468.9H928V468.4H929V468.4H930V468.5H931V468.5H932V468.4H933V468.4H934V468.4H935V468.4H936V468.7H937V468.4H938V468.5H939V469H940V469H941V468.5H942V468.5H943V468.7H944V468.6H945V469H946V468.9H947V468.7H948V468.6H949V468.9H950V469H951V468.9H952V468.9H953V469H954V469H955V468.8H956V469H957V469H958V469H959V469H960V469H961V468.9H962V468.9H963V468.9H964V469H965V469H966V469H967V469H968V469H969V469H970V469H971V469H972V469H973V469H974V469H975V469H976V469H977V469H978V469H979V468.9H980V469H981V469H982V469H983V469H984V469H985V468.9H986V469H987V469H988V469H989V469H990V469H991V469H992V469H993V469H994V469H995V469H996V469H997V469H998V469H999V469H1000V469H1001V469H1002V468.9H1003V469H1004V468.9H1005V468.9H1006V468.9H1007V469H1008V469H1009V469H1010V469H1011V469H1012V469H1013V469H1014V469H1015V468.9H1016V468.9H1017V469H1018V469H1019V469H1020V469H1021V468.9H1022V469H1023V469H1024V469H1025V469H1026V469H1027V469H1028V469H1029V469H1030V469H1031V469H1032V469H1033V469H1034V469H1035V469H1036V469H1037V469H1038V469H1039V469H1040V469H1041V469H1042V469H1043V469H1044V469H1045V468.9H1046V469H1047V469H1048V469H1049V469H1050V469H1051V469H1052V469H1053V469H1054V468.9H1055V469H1056V469H1057V469H1058V469H1059V469H1060V469H1061V469H1062V469H1063V468.9H1064V469H1065V469H1066V469H1067V469H1068V469H1069V468.9H1070V469H1071V469H1072V469H1073V469H1074V469H1075V469H1076V469H1077V469H1078V469H1079V469H1080V469H1081V469H1082V469H1083V469H1084V469H1085V469H1086V469H1087V469H1088V469H1089V469H1090V469H1091V469H1092V469H1093V469H1094V469H1095V469H1096V469H1097V469H1098V469H1099V469H1100V469H1101V469H1102V469H1103V469H1104V469H1105V469H1106V469H1107V469H1108V469H1109V469H1110V469H1111V469H1112V469H1113V469H1114V469H1115V469H1116V469H1117V469H1118V469H1119V469H1120V469H1121V469H1122V469H1123V469H1124V469H1125V469H1126V469H1127V469H1128V469H1129V469H1130V469H1131V469H1132V469H1133V469H1134V469H1135V469H1136V469H1137V469H1138V469H1139V469H1140V469H1141V469H1142V469H1143V469H1144V469H1145V469H1146V469H1147V469H1148V469H1149V469H1150V469H1151V469H1152V469H1153V469H1154V469H1155V469H1156V469H1157V469H1158V469H1159V469H1160V469H1161V469H1162V469H1163V469H1164V469H1165V469H1166V469H1167V469H1168V469H1169V469H1170V469H1171V469H1172V469H1173V469H1174V469H1175V469H1176V469H1177V469H1178V469H1179V469H1180V469H1181V469H1182V469H1183V469H1184V469H1185V469H1186V469H1187V469H1188V469H1189V469H1190V469H1191V469H1192V469H1193V469H1194V469H1195V469H1196V469H1197V469H1198V469H1199V469H1200V469H1201V469H1202V469H1203V469H1204V469H1205V469H1206V469H1207V469H1208V469H1209V469H1210V469H1211V469H1212V469H1213V469H1214V469H1215V469H1216V469H1217V469H1218V469H1219V469H1220V469H1221V469H1222V469H1223V469H1224V469H1225V469H1226V469H1227V469H1228V469H1229V470H1228V470H1227V470H1226V470H1225V470H1224V470H1223V470H1222V470H1221V470H1220V470H1219V470H1218V470H1217V470H1216V470H1215V470H1214V470H1213V470H1212V470H1211V470H1210V470H1209V470H1208V470H1207V470H1206V470H1205V470H1204V470H1203V470H1202V470H1201V470H1200V470H1199V470H1198V470H1197V470H1196V470H1195V470H1194V470H1193V470H1192V470H1191V470H1190V470H1189V470H1188V470H1187V470H1186V470H1185V470H1184V470H1183V470H1182V470H1181V470H1180V470H1179V470H1178V470H1177V470H1176V470H1175V470H1174V470H1173V470H1172V470H1171V470H1170V470H1169V470H1168V470H1167V470H1166V470H1165V470H1164V470H1163V470H1162V470H1161V470H1160V470H1159V470H1158V470H1157V470H1156V470H1155V470H1154V470H1153V470H1152V470H1151V470H1150V470H1149V470H1148V470H1147V470H1146V470H1145V470H1144V470H1143V470H1142V470H1141V470H1140V470H1139V470H1138V470H1137V470H1136V470H1135V470H1134V470H1133V470H1132V470H1131V470H1130V470H1129V470H1128V470H1127V470H1126V470H1125V470H1124V470H1123V470H1122V470H1121V470H1120V470H1119V470H1118V470H1117V470H1116V470H1115V470H1114V470H1113V470H1112V470H1111V470H1110V470H1109V470H1108V470H1107V470H1106V470H1105V470H1104V470H1103V470H1102V470H1101V470H1100V470H1099V470H1098V470H1097V470H1096V470H1095V470H1094V470H1093V470H1092V470H1091V470H1090V470H1089V470H1088V470H1087V470H1086V470H1085V470H1084V470H1083V470H1082V470H1081V470H1080V470H1079V470H1078V470H1077V470H1076V470H1075V470H1074V470H1073V470H1072V470H1071V470H1070V470H1069V470H1068V470H1067V470H1066V470H1065V470H1064V470H1063V470H1062V470H1061V470H1060V470H1059V470H1058V470H1057V470H1056V470H1055V470H1054V470H1053V470H1052V470H1051V470H1050V470H1049V470H1048V470H1047V470H1046V470H1045V470H1044V470H1043V470H1042V470H1041V470H1040V470H1039V470H1038V470H1037V470H1036V470H1035V470H1034V470H1033V470H1032V470H1031V470H1030V470H1029V470H1028V470H1027V470H1026V470H1025V470H1024V470H1023V470H1022V470H1021V470H1020V470H1019V470H1018V470H1017V470H1016V470H1015V470H1014V470H1013V470H1012V470H1011V470H1010V470H1009V470H1008V470H1007V470H1006V470H1005V470H1004V470H1003V470H1002V470H1001V470H1000V470H999V470H998V470H997V470H996V470H995V470H994V470H993V470H992V470H991V470H990V470H989V470H988V470H987V470H986V470H985V470H984V470.1H983V470.1H982V470H981V470H980V470H979V470H978V470H977V470H976V470H975V470H974V470H973V470H972V470H971V470H970V470H969V470.1H968V470H967V470H966V470H965V470.1H964V470H963V470.1H962V470.1H961V470H960V470H959V470H958V470H957V470.1H956V470.2H955V470H954V470H953V470.2H952V470.1H951V470.3H950V470.3H949V470.1H948V470.3H947V470.2H946V470.4H945V470.3H944V470.4H943V470.5H942V470.4H941V470.2H940V470.1H939V470.3H938V470.2H937V470.5H936V470.1H935V470.6H934V470.3H933V470.4H932V470.5H931V470.2H930V470.1H929V470.3H928V470.3H927V470.2H926V470.3H925V470.6H924V470.3H923V470.1H922V470.6H921V470.4H920V470.3H919V470.6H918V470.7H917V470.3H916V470.5H915V470.2H914V470.1H913V470.6H912V470.7H911V470.3H910V470.4H909V470.4H908V470.4H907V470.8H906V470.8H905V470.6H904V470.6H903V470.2H902V470.8H901V470.7H900V470.3H899V470.5H898V470.6H897V470.7H896V470.9H895V470.4H894V470.6H893V470.8H892V470.5H891V470.4H890V470.4H889V470.7H888V470.4H887V470.8H886V471H885V470.9H884V470.9H883V471H882V470.8H881V470.3H880V470.5H879V470.9H878V471.1H877V470.7H876V470.8H875V471.2H874V471.1H873V470.6H872V471.2H871V470.6H870V471H869V470.8H868V471.3H867V471.2H866V471.3H865V471H864V471.1H863V470.9H862V470.5H861V471.2H860V470.7H859V471.3H858V471.3H857V471.4H856V471.3H855V471.4H854V470.9H853V471.6H852V470.9H851V471.7H850V471.5H849V471.8H848V470.9H847V471.2H846V471.6H845V471.5H844V471.2H843V471.9H842V472H841V472H840V471H839V470.8H838V472.2H837V472.3H836V471.9H835V471.7H834V472.4H833V472.1H832V471.3H831V471.1H830V472H829V472.8H828V471.9H827V472.5H826V471.8H825V472.3H824V473.1H823V472.7H822V472.1H821V473.4H820V473H819V472.5H818V473.5H817V472.2H816V473H815V472.6H814V473.2H813V472H812V474.1H811V473H810V473.7H809V474.2H808V474.2H807V471.7H806V473.2H805V474.8H804V478H803V473.1H802V475.1H801V474.5H800V472.5H799V477.4H798V474.3H797V475.5H796V475.3H795V475.1H794V475.6H793V475H792V475.9H791V474.3H790V474.4H789V476.1H788V475.9H787V476.2H786V474.3H785V475H784V474.5H783V475.8H782V474.9H781V475.9H780V473.4H779V474.2H778V475.4H777V476.5H776V476H775V477.9H774V478.2H773V477.9H772V477H771V473.7H770V476.8H769V477.7H768V478.6H767V475.2H766V477.6H765V478.4H764V479.2H763V477.8H762V480.3H761V474.6H760V477.9H759V479.5H758V481.2H757V479H756V476.8H755V478.3H754V480H753V478.7H752V478.7H751V478.5H750V479.6H749V484H748V488.6H747V491H746V479.3H745V482.5H744V478H743V485H742V486H741V484.5H740V502.9H739V481.9H738V490.5H737V486.9H736V493.1H735V490.9H734V487.2H733V489.6H732V487.4H731V490.5H730V484H729V501.5H728V500.5H727V496.5H726V490H725V480.2H724V491.9H723V489.3H722V494.9H721V484.2H720V482.2H719V481.9H718V474.7H717V471.7H716V471.2H715Z" fill="#6a6a6a"/><text x="456" y="424.200" font-size="10" fill="#e28cee" font-family="Liberation Sans,sans-serif" textLength="36.500" lengthAdjust="spacingAndGlyphs">OFFLINE</text><text x="509" y="424.200" font-size="10" fill="#e28cee" font-family="Liberation Sans,sans-serif" textLength="36.500" lengthAdjust="spacingAndGlyphs">OFFLINE</text><text x="562" y="424.200" font-size="10" fill="#e28cee" font-family="Liberation Sans,sans-serif" textLength="36.500" lengthAdjust="spacingAndGlyphs">OFFLINE</text><text x="615" y="424.200" font-size="10" fill="#e28cee" font-family="Liberation Sans,sans-serif" textLength="36.500" lengthAdjust="spacingAndGlyphs">OFFLINE</text><text x="668" y="424.200" font-size="10" fill="#e28cee" font-family="Liberation Sans,sans-serif" textLength="36.500" lengthAdjust="spacingAndGlyphs">OFFLINE</text><text x="721" y="424.200" font-size="10" fill="#e28cee" font-family="Liberation Sans,sans-serif" textLength="36.500" lengthAdjust="spacingAndGlyphs">OFFLINE</text><text x="774" y="424.200" font-size="10" fill="#e28cee" font-family="Liberation Sans,sans-serif" textLength="36.500" lengthAdjust="spacingAndGlyphs">OFFLINE</text><text x="827" y="424.200" font-size="10" fill="#e28cee" font-family="Liberation Sans,sans-serif" textLength="36.500" lengthAdjust="spacingAndGlyphs">OFFLINE</text><text x="880" y="424.200" font-size="10" fill="#e28cee" font-family="Liberation Sans,sans-serif" textLength="36.500" lengthAdjust="spacingAndGlyphs">OFFLINE</text><text x="933" y="424.200" font-size="10" fill="#e28cee" font-family="Liberation Sans,sans-serif" textLength="36.500" lengthAdjust="spacingAndGlyphs">OFFLINE</text><text x="986" y="424.200" font-size="10" fill="#e28cee" font-family="Liberation Sans,sans-serif" textLength="36.500" lengthAdjust="spacingAndGlyphs">OFFLINE</text><text x="1039" y="424.200" font-size="10" fill="#e28cee" font-family="Liberation Sans,sans-serif" textLength="36.500" lengthAdjust="spacingAndGlyphs">OFFLINE</text><text x="1092" y="424.200" font-size="10" fill="#e28cee" font-family="Liberation Sans,sans-serif" textLength="36.500" lengthAdjust="spacingAndGlyphs">OFFLINE</text><text x="1145" y="424.200" font-size="10" fill="#e28cee" font-family="Liberation Sans,sans-serif" textLength="36.500" lengthAdjust="spacingAndGlyphs">OFFLINE</text><text x="1198" y="424.200" font-size="10" fill="#e28cee" font-family="Liberation Sans,sans-serif" textLength="36.500" lengthAdjust="spacingAndGlyphs">OFFLINE</text><text x="1251" y="424.200" font-size="10" fill="#e28cee" font-family="Liberation Sans,sans-serif" textLength="36.500" lengthAdjust="spacingAndGlyphs">OFFLINE</text><rect x="457" y="421" width="777" height="1" fill="#76000e"/><rect x="714" y="421" width="1" height="1" fill="#c8ae3c"/><polygon points="578.800,322 585.500,322 585.500,328.500" fill="#3c4048"/><polygon points="580,517 585,517 585,512" fill="#3c3c3c"/><polygon points="714,538 722,538 714,546" fill="#e4d488"/><polygon points="714,729 714,724.500 718.500,729" fill="#dccc80"/><polygon points="1228,538 1221,538 1228,545" fill="#e4d488"/><path d="M715 585V585H716V582.9H717V580.7H718V577.9H719V573.3H720V565.6H721V568.4H722V563.4H723V565.6H724V565.2H725V570.3H726V557.2H727V542.5H728V546.4H729V567.4H730V562.1H731V564.7H732V570.5H733V565H734V568.1H735V565H736V563.4H737V570.8H738V568.7H739V555.4H740V569.1H741V577H742V572.5H743V571.4H744V575H745V570.7H746V572.7H747V576H748V578.6H749V574.1H750V575.2H751V578.1H752V577.9H753V573.3H754V579.2H755V575H756V577.7H757V576.2H758V568.7H759V580.4H760V566H761V576.4H762V581H763V575.4H764V576.5H765V576.6H766V576.5H767V576.2H768V576.5H769V569H770V570.9H771V578.1H772V581.9H773V578.1H774V580.3H775V580.8H776V579.7H777V581.1H778V578.6H779V581.8H780V579.5H781V580.5H782V579.9H783V576.5H784V582.8H785V579.6H786V583.1H787V582.9H788V580.3H789V582H790V580.2H791V580.3H792V581.3H793V580.4H794V580H795V576.7H796V582.3H797V580.8H798V580.3H799V580.6H800V581.5H801V583.5H802V581.2H803V581.4H804V578.6H805V582.7H806V581.5H807V581.6H808V581.5H809V582.4H810V582.5H811V578.7H812V581.9H813V583.8H814V582.9H815V582.2H816V583.7H817V582.9H818V583.1H819V583.4H820V584.1H821V583.3H822V584H823V583.8H824V582.8H825V580H826V583.2H827V585H828V583.1H829V583.8H830V584.9H831V584.6H832V582.3H833V584.1H834V584H835V583.7H836V584.3H837V585.2H838V583.8H839V584.2H840V583.8H841V584.4H842V584.1H843V585.1H844V584.3H845V584.3H846V584.3H847V584.5H848V584.1H849V584.4H850V584.2H851V584.5H852V585H853V585.4H854V584.9H855V585.1H856V584.7H857V584.4H858V584.4H859V584.6H860V584.8H861V585.5H862V585.3H863V585.3H864V584.9H865V584.6H866V585H867V585.1H868V584.9H869V585.2H870V585.2H871V585.3H872V585.4H873V585.2H874V584.9H875V584.8H876V585.6H877V585.2H878V584.8H879V585.1H880V585H881V584.9H882V585.1H883V585.1H884V585.5H885V585.2H886V585.3H887V585.3H888V585.2H889V585.1H890V585H891V585.2H892V585.7H893V585.1H894V585.4H895V585.2H896V585.3H897V585.2H898V585.6H899V585.1H900V585.8H901V585.6H902V585.3H903V585.4H904V585.8H905V585.4H906V585.5H907V585.6H908V585.3H909V585.8H910V585.3H911V585.3H912V585.5H913V585.3H914V585.4H915V585.6H916V585.4H917V585.5H918V585.8H919V585.8H920V585.5H921V585.4H922V585.4H923V585.7H924V585.9H925V585.4H926V585.7H927V585.6H928V585.6H929V585.5H930V585.4H931V585.4H932V585.4H933V585.7H934V585.4H935V585.8H936V585.7H937V585.7H938V585.8H939V585.5H940V585.5H941V585.9H942V585.5H943V586H944V585.7H945V585.6H946V585.6H947V585.8H948V586H949V585.7H950V586H951V586H952V585.8H953V586H954V585.9H955V585.9H956V585.8H957V585.9H958V585.9H959V585.8H960V585.9H961V585.9H962V585.9H963V585.9H964V586H965V586H966V586H967V586H968V586H969V586H970V586H971V586H972V586H973V586H974V586H975V586H976V586H977V586H978V586H979V586H980V586H981V586H982V586H983V586H984V586H985V585.9H986V586H987V586H988V586H989V586H990V586H991V586H992V586H993V586H994V586H995V586H996V586H997V586H998V586H999V586H1000V586H1001V586H1002V586H1003V586H1004V586H1005V586H1006V586H1007V585.9H1008V586H1009V586H1010V585.9H1011V586H1012V586H1013V586H1014V586H1015V586H1016V586H1017V586H1018V586H1019V586H1020V586H1021V586H1022V586H1023V586H1024V586H1025V586H1026V586H1027V586H1028V586H1029V586H1030V586H1031V586H1032V585.9H1033V586H1034V586H1035V586H1036V586H1037V586H1038V586H1039V586H1040V586H1041V586H1042V586H1043V586H1044V586H1045V586H1046V586H1047V586H1048V585.9H1049V586H1050V586H1051V586H1052V586H1053V586H1054V586H1055V586H1056V586H1057V586H1058V586H1059V586H1060V586H1061V586H1062V586H1063V586H1064V586H1065V586H1066V586H1067V586H1068V586H1069V586H1070V586H1071V586H1072V586H1073V586H1074V586H1075V586H1076V586H1077V586H1078V586H1079V586H1080V586H1081V586H1082V586H1083V586H1084V586H1085V586H1086V586H1087V586H1088V586H1089V586H1090V586H1091V586H1092V586H1093V586H1094V586H1095V586H1096V586H1097V586H1098V586H1099V586H1100V586H1101V586H1102V586H1103V586H1104V586H1105V586H1106V586H1107V586H1108V586H1109V586H1110V586H1111V586H1112V586H1113V586H1114V586H1115V586H1116V586H1117V586H1118V586H1119V586H1120V586H1121V586H1122V586H1123V586H1124V586H1125V586H1126V586H1127V586H1128V586H1129V586H1130V586H1131V586H1132V586H1133V586H1134V586H1135V586H1136V586H1137V586H1138V586H1139V586H1140V586H1141V586H1142V586H1143V586H1144V586H1145V586H1146V586H1147V586H1148V586H1149V586H1150V586H1151V586H1152V586H1153V586H1154V586H1155V586H1156V586H1157V586H1158V586H1159V586H1160V586H1161V586H1162V586H1163V586H1164V586H1165V586H1166V586H1167V586H1168V586H1169V586H1170V586H1171V586H1172V586H1173V586H1174V586H1175V586H1176V586H1177V586H1178V586H1179V586H1180V586H1181V586H1182V586H1183V586H1184V586H1185V586H1186V586H1187V586H1188V586H1189V586H1190V586H1191V586H1192V586H1193V586H1194V586H1195V586H1196V586H1197V586H1198V586H1199V586H1200V586H1201V586H1202V586H1203V586H1204V586H1205V586H1206V586H1207V586H1208V586H1209V586H1210V586H1211V586H1212V586H1213V586H1214V586H1215V586H1216V586H1217V586H1218V586H1219V586H1220V586H1221V586H1222V586H1223V586H1224V586H1225V586H1226V586H1227V586H1228V587H1227V587H1226V587H1225V587H1224V587H1223V587H1222V587H1221V587H1220V587H1219V587H1218V587H1217V587H1216V587H1215V587H1214V587H1213V587H1212V587H1211V587H1210V587H1209V587H1208V587H1207V587H1206V587H1205V587H1204V587H1203V587H1202V587H1201V587H1200V587H1199V587H1198V587H1197V587H1196V587H1195V587H1194V587H1193V587H1192V587H1191V587H1190V587H1189V587H1188V587H1187V587H1186V587H1185V587H1184V587H1183V587H1182V587H1181V587H1180V587H1179V587H1178V587H1177V587H1176V587H1175V587H1174V587H1173V587H1172V587H1171V587H1170V587H1169V587H1168V587H1167V587H1166V587H1165V587H1164V587H1163V587H1162V587H1161V587H1160V587H1159V587H1158V587H1157V587H1156V587H1155V587H1154V587H1153V587H1152V587H1151V587H1150V587H1149V587H1148V587H1147V587H1146V587H1145V587H1144V587H1143V587H1142V587H1141V587H1140V587H1139V587H1138V587H1137V587H1136V587H1135V587H1134V587H1133V587H1132V587H1131V587H1130V587H1129V587H1128V587H1127V587H1126V587H1125V587H1124V587H1123V587H1122V587H1121V587H1120V587H1119V587H1118V587H1117V587H1116V587H1115V587H1114V587H1113V587H1112V587H1111V587H1110V587H1109V587H1108V587H1107V587H1106V587H1105V587H1104V587H1103V587H1102V587H1101V587H1100V587H1099V587H1098V587H1097V587H1096V587H1095V587H1094V587H1093V587H1092V587H1091V587H1090V587H1089V587H1088V587H1087V587H1086V587H1085V587H1084V587H1083V587H1082V587H1081V587H1080V587H1079V587H1078V587H1077V587H1076V587H1075V587H1074V587H1073V587H1072V587H1071V587H1070V587H1069V587H1068V587H1067V587H1066V587H1065V587H1064V587H1063V587H1062V587H1061V587H1060V587H1059V587H1058V587H1057V587H1056V587H1055V587H1054V587H1053V587H1052V587H1051V587H1050V587H1049V587H1048V587H1047V587H1046V587H1045V587H1044V587H1043V587H1042V587H1041V587H1040V587H1039V587H1038V587H1037V587H1036V587H1035V587H1034V587H1033V587H1032V587H1031V587H1030V587H1029V587H1028V587H1027V587H1026V587H1025V587H1024V587H1023V587H1022V587H1021V587H1020V587H1019V587H1018V587H1017V587H1016V587H1015V587H1014V587H1013V587H1012V587H1011V587H1010V587H1009V587H1008V587H1007V587H1006V587H1005V587H1004V587H1003V587H1002V587H1001V587H1000V587H999V587H998V587H997V587H996V587H995V587H994V587H993V587H992V587H991V587H990V587H989V587H988V587H987V587H986V587H985V587H984V587H983V587H982V587H981V587H980V587H979V587H978V587H977V587H976V587H975V587H974V587H973V587H972V587H971V587H970V587H969V587H968V587H967V587H966V587H965V587H964V587H963V587.1H962V587.1H961V587H960V587H959V587.1H958V587.1H957V587.1H956V587H955V587.2H954V587.2H953V587H952V587.2H951V587.2H950V587.3H949V587H948V587.3H947V587H946V587.3H945V587.3H944V587.3H943V587.2H942V587.4H941V587.3H940V587.3H939V587.4H938V587.3H937V587.3H936V587.3H935V587.5H934V587.3H933V587.2H932V587.3H931V587.6H930V587.4H929V587.1H928V587.5H927V587.2H926V587.5H925V587.3H924V587.5H923V587.1H922V587.3H921V587.4H920V587.1H919V587.6H918V587.4H917V587.7H916V587.5H915V587.7H914V587.4H913V587.3H912V587.3H911V587.6H910V587.2H909V587.7H908V587.4H907V587.5H906V587.6H905V587.6H904V587.2H903V587.2H902V587.5H901V587.2H900V587.8H899V587.8H898V587.3H897V587.7H896V587.6H895V587.4H894V587.7H893V587.8H892V587.4H891V587.9H890V587.7H889V587.6H888V587.5H887V587.8H886V587.4H885V587.3H884V587.7H883V587.4H882V587.9H881V587.7H880V588H879V587.6H878V587.8H877V588.1H876V588.1H875V587.3H874V588.1H873V588H872V587.3H871V587.2H870V588H869V587.9H868V587.7H867V588H866V587.9H865V587.4H864V587.9H863V587.9H862V588.3H861V588.2H860V587.5H859V588.2H858V588.1H857V588.1H856V588.5H855V587.6H854V587.8H853V588.1H852V588.5H851V587.5H850V588.5H849V588.5H848V588.2H847V588.5H846V588.2H845V588.6H844V590H843V588.8H842V589H841V588.9H840V589.1H839V588.8H838V589.1H837V588.3H836V588.3H835V591.1H834V589.2H833V589.4H832V588.4H831V589H830V590.6H829V588.3H828V588.6H827V588.4H826V588.8H825V589.8H824V589H823V589.8H822V590H821V588.9H820V589.3H819V589.1H818V588.7H817V590.1H816V592.1H815V589.5H814V589.8H813V590.8H812V590.5H811V590H810V594.6H809V590.4H808V591.2H807V590.6H806V591.1H805V591.6H804V591.5H803V589.7H802V591.6H801V595.8H800V595H799V591.3H798V590.4H797V592H796V592.6H795V591.2H794V590.2H793V597.6H792V591.8H791V590.6H790V596.4H789V592.8H788V592.4H787V593H786V589.6H785V592.8H784V592.1H783V592.3H782V591.5H781V593.7H780V592.6H779V592.3H778V592.7H777V594.4H776V591.7H775V590.3H774V593.6H773V594.3H772V601.8H771V595.2H770V594.8H769V594.8H768V596.1H767V596.4H766V596.5H765V602.4H764V591.3H763V591.3H762V596.2H761V594.6H760V593.5H759V593.8H758V597.6H757V602.8H756V594.7H755V592.5H754V598.6H753V598.1H752V599.2H751V597.7H750V596.7H749V594.2H748V599.9H747V594.8H746V596.5H745V602.3H744V595.9H743V597.1H742V602.7H741V596.8H740V599.8H739V619.6H738V608.8H737V595.5H736V609.2H735V608.3H734V607.6H733V602.5H732V602.8H731V610.8H730V602.3H729V617.5H728V616.5H727V612.7H726V608.6H725V598.3H724V606H723V606.7H722V606.1H721V597.9H720V599.9H719V596.9H718V592.2H717V589.3H716V588H715Z" fill="url(#wv)"/><path d="M715 681V681H716V679.2H717V679.4H718V673.1H719V668.9H720V661.4H721V667.5H722V661.7H723V660.9H724V659.4H725V658.8H726V653.2H727V638.5H728V642.4H729V661.5H730V660.8H731V659.7H732V663.8H733V661H734V671H735V658.3H736V661.1H737V664.5H738V662.7H739V665.7H740V667.8H741V668.6H742V656.2H743V667.4H744V670.8H745V666.3H746V672.5H747V668.3H748V669.6H749V675.8H750V670.2H751V670.5H752V674.2H753V669.4H754V674H755V671.1H756V674.1H757V671.8H758V673.2H759V672.5H760V662H761V671.8H762V665.2H763V671.5H764V676.1H765V675.2H766V676.1H767V672.7H768V677.5H769V673.4H770V666.9H771V676.1H772V674.7H773V674.4H774V673.8H775V674.3H776V673.9H777V674.8H778V676.7H779V677.1H780V674.9H781V675H782V675.3H783V676H784V676.9H785V677.8H786V678.8H787V677.2H788V675.7H789V672.5H790V676.2H791V677.6H792V676.4H793V676.6H794V677.2H795V672.7H796V677.3H797V676.9H798V676.8H799V673.6H800V677.2H801V674.1H802V677.9H803V677.9H804V677.1H805V678.5H806V677.8H807V677.8H808V678.7H809V679.3H810V679.3H811V678.6H812V678.9H813V679.7H814V679.1H815V679.3H816V679.2H817V679.4H818V678.9H819V680.4H820V678.8H821V679.5H822V680.1H823V679.5H824V679.7H825V679.2H826V679.7H827V676.1H828V680H829V679.4H830V678H831V680.6H832V680H833V680.5H834V680H835V679.7H836V680.1H837V680.7H838V680.3H839V680.4H840V680.2H841V680.3H842V681.3H843V679.9H844V680.2H845V680.1H846V680.7H847V681.2H848V681.3H849V681.1H850V681.1H851V680.6H852V680.4H853V680.3H854V680.8H855V681H856V680.6H857V680.5H858V681.1H859V680.9H860V681.6H861V681.1H862V681H863V681.1H864V680.9H865V680.6H866V681.2H867V681.2H868V681.6H869V680.7H870V680.9H871V681.5H872V681.6H873V681.1H874V681H875V680.9H876V680.8H877V681.7H878V680.9H879V681.2H880V681.4H881V681.6H882V680.9H883V681.2H884V681.2H885V681.1H886V681H887V681.2H888V681.3H889V681.6H890V681.4H891V681.2H892V681H893V681.3H894V681.4H895V681.1H896V681.3H897V681.7H898V681.6H899V681.3H900V681.6H901V681.4H902V681.7H903V681.2H904V681.3H905V681.7H906V681.4H907V681.7H908V681.4H909V681.2H910V681.8H911V681.6H912V681.3H913V681.5H914V681.3H915V681.7H916V681.3H917V681.9H918V682H919V681.8H920V681.7H921V681.3H922V681.5H923V681.8H924V681.4H925V682H926V681.3H927V681.9H928V681.4H929V681.5H930V681.5H931V681.5H932V681.4H933V681.4H934V681.4H935V681.4H936V681.7H937V681.4H938V681.5H939V682H940V682H941V681.5H942V681.5H943V681.7H944V681.6H945V682H946V681.9H947V681.7H948V681.7H949V681.9H950V682H951V681.9H952V681.9H953V682H954V682H955V681.9H956V682H957V682H958V682H959V682H960V682H961V681.9H962V681.9H963V681.9H964V682H965V682H966V682H967V682H968V682H969V682H970V682H971V682H972V682H973V682H974V682H975V682H976V682H977V682H978V682H979V681.9H980V682H981V682H982V682H983V682H984V682H985V681.9H986V682H987V682H988V682H989V682H990V682H991V682H992V682H993V682H994V682H995V682H996V682H997V682H998V682H999V682H1000V682H1001V682H1002V681.9H1003V682H1004V681.9H1005V681.9H1006V681.9H1007V682H1008V682H1009V682H1010V682H1011V682H1012V682H1013V682H1014V682H1015V682H1016V682H1017V682H1018V682H1019V682H1020V682H1021V681.9H1022V682H1023V682H1024V682H1025V682H1026V682H1027V682H1028V682H1029V682H1030V682H1031V682H1032V682H1033V682H1034V682H1035V682H1036V682H1037V682H1038V682H1039V682H1040V682H1041V682H1042V682H1043V682H1044V682H1045V682H1046V682H1047V682H1048V682H1049V682H1050V682H1051V682H1052V682H1053V682H1054V682H1055V682H1056V682H1057V682H1058V682H1059V682H1060V682H1061V682H1062V682H1063V682H1064V682H1065V682H1066V682H1067V682H1068V682H1069V682H1070V682H1071V682H1072V682H1073V682H1074V682H1075V682H1076V682H1077V682H1078V682H1079V682H1080V682H1081V682H1082V682H1083V682H1084V682H1085V682H1086V682H1087V682H1088V682H1089V682H1090V682H1091V682H1092V682H1093V682H1094V682H1095V682H1096V682H1097V682H1098V682H1099V682H1100V682H1101V682H1102V682H1103V682H1104V682H1105V682H1106V682H1107V682H1108V682H1109V682H1110V682H1111V682H1112V682H1113V682H1114V682H1115V682H1116V682H1117V682H1118V682H1119V682H1120V682H1121V682H1122V682H1123V682H1124V682H1125V682H1126V682H1127V682H1128V682H1129V682H1130V682H1131V682H1132V682H1133V682H1134V682H1135V682H1136V682H1137V682H1138V682H1139V682H1140V682H1141V682H1142V682H1143V682H1144V682H1145V682H1146V682H1147V682H1148V682H1149V682H1150V682H1151V682H1152V682H1153V682H1154V682H1155V682H1156V682H1157V682H1158V682H1159V682H1160V682H1161V682H1162V682H1163V682H1164V682H1165V682H1166V682H1167V682H1168V682H1169V682H1170V682H1171V682H1172V682H1173V682H1174V682H1175V682H1176V682H1177V682H1178V682H1179V682H1180V682H1181V682H1182V682H1183V682H1184V682H1185V682H1186V682H1187V682H1188V682H1189V682H1190V682H1191V682H1192V682H1193V682H1194V682H1195V682H1196V682H1197V682H1198V682H1199V682H1200V682H1201V682H1202V682H1203V682H1204V682H1205V682H1206V682H1207V682H1208V682H1209V682H1210V682H1211V682H1212V682H1213V682H1214V682H1215V682H1216V682H1217V682H1218V682H1219V682H1220V682H1221V682H1222V682H1223V682H1224V682H1225V682H1226V682H1227V682H1228V683H1227V683H1226V683H1225V683H1224V683H1223V683H1222V683H1221V683H1220V683H1219V683H1218V683H1217V683H1216V683H1215V683H1214V683H1213V683H1212V683H1211V683H1210V683H1209V683H1208V683H1207V683H1206V683H1205V683H1204V683H1203V683H1202V683H1201V683H1200V683H1199V683H1198V683H1197V683H1196V683H1195V683H1194V683H1193V683H1192V683H1191V683H1190V683H1189V683H1188V683H1187V683H1186V683H1185V683H1184V683H1183V683H1182V683H1181V683H1180V683H1179V683H1178V683H1177V683H1176V683H1175V683H1174V683H1173V683H1172V683H1171V683H1170V683H1169V683H1168V683H1167V683H1166V683H1165V683H1164V683H1163V683H1162V683H1161V683H1160V683H1159V683H1158V683H1157V683H1156V683H1155V683H1154V683H1153V683H1152V683H1151V683H1150V683H1149V683H1148V683H1147V683H1146V683H1145V683H1144V683H1143V683H1142V683H1141V683H1140V683H1139V683H1138V683H1137V683H1136V683H1135V683H1134V683H1133V683H1132V683H1131V683H1130V683H1129V683H1128V683H1127V683H1126V683H1125V683H1124V683H1123V683H1122V683H1121V683H1120V683H1119V683H1118V683H1117V683H1116V683H1115V683H1114V683H1113V683H1112V683H1111V683H1110V683H1109V683H1108V683H1107V683H1106V683H1105V683H1104V683H1103V683H1102V683H1101V683H1100V683H1099V683H1098V683H1097V683H1096V683H1095V683H1094V683H1093V683H1092V683H1091V683H1090V683H1089V683H1088V683H1087V683H1086V683H1085V683H1084V683H1083V683H1082V683H1081V683H1080V683H1079V683H1078V683H1077V683H1076V683H1075V683H1074V683H1073V683H1072V683H1071V683H1070V683H1069V683H1068V683H1067V683H1066V683H1065V683H1064V683H1063V683H1062V683H1061V683H1060V683H1059V683H1058V683H1057V683H1056V683H1055V683H1054V683H1053V683H1052V683H1051V683H1050V683H1049V683H1048V683H1047V683H1046V683H1045V683H1044V683H1043V683H1042V683H1041V683H1040V683H1039V683H1038V683H1037V683H1036V683H1035V683H1034V683H1033V683H1032V683H1031V683H1030V683H1029V683H1028V683H1027V683H1026V683H1025V683H1024V683H1023V683H1022V683H1021V683H1020V683H1019V683H1018V683H1017V683H1016V683H1015V683H1014V683H1013V683H1012V683H1011V683H1010V683H1009V683H1008V683H1007V683H1006V683H1005V683H1004V683H1003V683H1002V683H1001V683H1000V683H999V683H998V683H997V683H996V683H995V683H994V683H993V683H992V683H991V683H990V683H989V683H988V683H987V683H986V683H985V683H984V683H983V683H982V683H981V683H980V683H979V683H978V683H977V683H976V683H975V683H974V683H973V683H972V683H971V683H970V683H969V683H968V683H967V683H966V683H965V683H964V683H963V683H962V683H961V683H960V683H959V683H958V683H957V683H956V683.2H955V683H954V683H953V683.2H952V683.1H951V683.2H950V683.2H949V683.1H948V683.3H947V683.2H946V683.3H945V683.3H944V683.3H943V683.4H942V683.3H941V683.1H940V683H939V683.3H938V683.2H937V683.4H936V683.1H935V683.5H934V683.3H933V683.3H932V683.4H931V683.1H930V683.1H929V683.2H928V683.2H927V683.1H926V683.3H925V683.6H924V683.3H923V683.1H922V683.5H921V683.4H920V683.3H919V683.5H918V683.6H917V683.2H916V683.4H915V683.2H914V683.1H913V683.5H912V683.7H911V683.2H910V683.3H909V683.3H908V683.3H907V683.7H906V683.7H905V683.5H904V683.6H903V683.2H902V683.7H901V683.7H900V683.3H899V683.4H898V683.6H897V683.6H896V683.8H895V683.3H894V683.5H893V683.7H892V683.5H891V683.3H890V683.4H889V683.6H888V683.4H887V683.8H886V683.9H885V683.8H884V683.8H883V683.9H882V683.7H881V683.3H880V683.5H879V683.8H878V684H877V683.6H876V683.7H875V684.1H874V684H873V683.5H872V684.1H871V683.5H870V683.9H869V683.7H868V684.2H867V684.1H866V684.2H865V683.9H864V684H863V683.8H862V683.5H861V684.1H860V683.6H859V684.2H858V684.2H857V684.3H856V684.1H855V684.2H854V683.8H853V684.5H852V683.8H851V684.6H850V684.3H849V684.7H848V683.8H847V684.1H846V684.5H845V684.4H844V684.1H843V684.8H842V684.8H841V684.9H840V683.9H839V683.7H838V685H837V685.1H836V684.8H835V684.6H834V685.2H833V684.9H832V684.2H831V684H830V684.8H829V685.6H828V684.7H827V685.3H826V684.7H825V685.1H824V685.9H823V685.5H822V685H821V686.1H820V685.8H819V685.4H818V686.3H817V685H816V685.7H815V685.4H814V686H813V684.9H812V686.8H811V685.8H810V686.4H809V686.9H808V686.9H807V684.6H806V685.9H805V687.5H804V690.5H803V685.9H802V687.8H801V687.2H800V685.3H799V689.9H798V687H797V688.1H796V687.9H795V687.8H794V688.2H793V687.6H792V688.5H791V687H790V687.1H789V688.6H788V688.5H787V688.8H786V687H785V687.6H784V687.2H783V688.4H782V687.5H781V688.5H780V686.1H779V686.9H778V688H777V689.1H776V688.6H775V690.4H774V690.6H773V690.4H772V689.5H771V686.5H770V689.4H769V690.2H768V691H767V687.9H766V690.1H765V690.8H764V691.6H763V690.2H762V692.7H761V687.3H760V690.4H759V691.9H758V693.5H757V691.4H756V689.4H755V690.8H754V692.4H753V691.1H752V691.1H751V691H750V692H749V696.1H748V700.4H747V702.6H746V691.7H745V694.7H744V690.5H743V697H742V698H741V696.6H740V713.8H739V694.1H738V702.2H737V698.8H736V704.6H735V702.5H734V699.1H733V701.3H732V699.3H731V702.2H730V696.1H729V712.5H728V711.6H727V707.8H726V701.8H725V692.5H724V703.5H723V701H722V706.3H721V696.2H720V694.4H719V694.1H718V687.3H717V684.5H716V684.1H715Z" fill="url(#wv)"/><rect x="714" y="635" width="514" height="1" fill="#76000e"/><circle cx="464.5" cy="314" r="5.700" fill="#444" stroke="#727272" stroke-width="1"/><path d="M464.5 314v-4.500" stroke="#8fb0b0" stroke-width="1"/><rect x="475" y="308" width="13" height="12" fill="#6a6a6a"/><rect x="490" y="308" width="13" height="12" fill="#6a6a6a"/><rect x="505" y="308" width="13" height="12" fill="#6a6a6a"/><rect x="520" y="308" width="13" height="12" fill="#6a6a6a"/><rect x="535" y="308" width="13" height="12" fill="#6a6a6a"/><rect x="550" y="308" width="13" height="12" fill="#6a6a6a"/><rect x="478" y="314" width="7" height="5" fill="#505050"/><path d="M479.5 314v-2a2 2 0 0 1 4 0v2" fill="none" stroke="#505050" stroke-width="1.200"/><path d="M493.5 318v-7l3 5 3-5v7" fill="none" stroke="#505050" stroke-width="1.200"/><ellipse cx="511.5" cy="313.5" rx="4.500" ry="3" fill="#505050"/><path d="M510 315.5l-1 3 3-2z" fill="#505050"/><path d="M525 312.5h2v4.500M524.5 318.5h4" fill="none" stroke="#505050" stroke-width="1.500"/><rect x="525.5" y="309" width="2" height="1.500" fill="#505050"/><text x="541.5" y="318" font-size="9" font-weight="bold" fill="#505050" font-family="Liberation Sans,sans-serif" text-anchor="middle">FX</text><rect x="552" y="316" width="3" height="3" fill="#505050"/><rect x="555" y="313" width="3" height="3" fill="#505050"/><rect x="558" y="316" width="3" height="3" fill="#505050"/><circle cx="722.5" cy="531.5" r="5.700" fill="#444" stroke="#727272" stroke-width="1"/><path d="M722.5 531.5v-4.500" stroke="#8fb0b0" stroke-width="1"/><rect x="733" y="526" width="13" height="11" fill="#6a6a6a"/><rect x="748" y="526" width="13" height="11" fill="#6a6a6a"/><rect x="763" y="526" width="13" height="11" fill="#6a6a6a"/><rect x="778" y="526" width="13" height="11" fill="#5fc8c8"/><rect x="793" y="526" width="13" height="11" fill="#6a6a6a"/><rect x="808" y="526" width="13" height="11" fill="#6a6a6a"/><rect x="736" y="531.5" width="7" height="5" fill="#505050"/><path d="M737.5 531.5v-2a2 2 0 0 1 4 0v2" fill="none" stroke="#505050" stroke-width="1.200"/><path d="M751.5 535v-7l3 5 3-5v7" fill="none" stroke="#505050" stroke-width="1.200"/><ellipse cx="769.5" cy="531" rx="4.500" ry="3" fill="#505050"/><path d="M768 533l-1 3 3-2z" fill="#505050"/><path d="M783 530.5h2v4.500M782.5 535.5h4" fill="none" stroke="#ffffff" stroke-width="1.500"/><rect x="783.5" y="527" width="2" height="1.500" fill="#ffffff"/><text x="799.5" y="535" font-size="9" font-weight="bold" fill="#505050" font-family="Liberation Sans,sans-serif" text-anchor="middle">FX</text><rect x="810" y="533" width="3" height="3" fill="#505050"/><rect x="813" y="530.5" width="3" height="3" fill="#505050"/><rect x="816" y="533" width="3" height="3" fill="#505050"/><text x="567.400" y="317.900" font-size="9.500" fill="#e2e2e2" font-family="Liberation Sans,sans-serif" textLength="38.200" lengthAdjust="spacing">Fuel.rpp</text><text x="825.800" y="534.200" font-size="9.500" fill="#e2e2e2" font-family="Liberation Sans,sans-serif" textLength="262" lengthAdjust="spacing">EXPLReal_Fuel-Small 01 Composite_AKBOOM_Explosions</text><rect x="461" y="299" width="775" height="220" fill="none" stroke="#00ccff" stroke-width="4"/><rect x="709" y="523" width="521" height="208" fill="none" stroke="#00ccff" stroke-width="4"/><rect x="707" y="517" width="531" height="4" fill="#00ccff"/><defs><filter id="bsh" x="-30%" y="-30%" width="160%" height="170%"><feGaussianBlur stdDeviation="2.200"/></filter></defs><circle cx="664.5" cy="420" r="23.500" fill="#000" opacity="0.450" filter="url(#bsh)"/><circle cx="664" cy="416.5" r="24.600" fill="#109ad7"/><polygon points="667,406.700 662.600,406.700 656.600,410.600 657.800,413.400 661.900,411 661.900,424.300 656.800,424.300 656.800,427.200 670,427.200 670,424.300 667,424.300" fill="#fff"/><circle cx="969.5" cy="636.5" r="23.500" fill="#000" opacity="0.450" filter="url(#bsh)"/><circle cx="969" cy="633" r="24.600" fill="#109ad7"/><text x="968.2" y="643" font-size="28" font-weight="bold" fill="#fff" text-anchor="middle" font-family="Liberation Sans,sans-serif">2</text></svg><div class="a t1" style="left:0;top:0"><div class="a" style="left:20px;top:307px;width:386px;height:215px;background:#a68416;box-shadow:inset -1px -1px 0 #b18e18,inset 0 1px 0 #b18e18"></div><div class="box" style="left:26px;top:313px;width:190px;height:22px;border-radius:11px 0 0 11px"></div><div class="box" style="left:26px;top:340px;width:190px;height:22px"></div><svg class="a" style="left:22px;top:311px" width="28" height="30"><defs><linearGradient id="rgt1" x1="0" x2="0" y1="0" y2="1"><stop offset="0" stop-color="#b98078"/><stop offset="0.300" stop-color="#9a3c36"/><stop offset="0.600" stop-color="#8c2e2a"/><stop offset="1" stop-color="#741f1c"/></linearGradient></defs><ellipse cx="14" cy="23.800" rx="7" ry="2.200" fill="#000" opacity="0.150"/><circle cx="13.400" cy="12.900" r="10.300" fill="#0a0a0a"/><circle cx="13.900" cy="12.900" r="9.300" fill="url(#rgt1)"/><circle cx="14" cy="13" r="4" fill="none" stroke="#f6e4e2" stroke-width="2.300"/></svg><div class="a" style="left:50.5px;top:317px;font-size:11px;line-height:14px;color:#d6a83c;white-space:nowrap;letter-spacing:0.501px">Fuel Project</div><div class="a" style="left:31px;top:350px;width:180px;height:2px;background:#000"></div><div class="a" style="left:151px;top:359px;width:12px;height:5px;border-radius:50%;background:rgba(0,0,0,.28)"></div><div class="a" style="left:150px;top:343px;width:15px;height:15px;background:linear-gradient(90deg,#c4c4c4 0,#e4e4e4 3px,#fff 6.500px,#fff 7px,#111 7px,#111 8px,#f2f2f2 8px,#dcdcdc 11px,#cfcfcf 15px);border-radius:1.500px"></div><div class="slot" style="left:27px;top:369px"></div><div class="slot" style="left:27px;top:393px"></div><div class="slot" style="left:27px;top:417px"></div><div class="slot" style="left:27px;top:441px"></div><div class="slot" style="left:27px;top:465px"></div><div class="slot" style="left:27px;top:489px"></div><svg class="a" style="left:222px;top:339px" width="160" height="28"><polygon points="1,7 5,2 35,2 35,19.500 32.500,22 1,22" fill="#000" opacity="0.220" transform="translate(0,2)"/><polygon points="1,7 5,2 35,2 35,19.500 32.500,22 1,22" fill="#2b2b22"/><clipPath id="rct1"><polygon points="2,7.300 5.500,3 34,3 34,19 32,21 2,21"/></clipPath><g clip-path="url(#rct1)"><polygon points="5,22 9.500,2 14,2 9.500,22" fill="#2fe6b4"/><polygon points="11.500,22 16,2 20,2 15.500,22" fill="#6a5a22"/><polygon points="17.500,22 22,2 26,2 21.500,22" fill="#2b5868"/></g><text x="5.600" y="16.300" font-size="10.500" fill="#fff" stroke="#fff" stroke-width="0.250" font-family="Liberation Sans,sans-serif" textLength="25.500" lengthAdjust="spacingAndGlyphs">Route</text><polygon points="42.500,7 46.500,2 77.500,2 77.500,20 75.500,22 42.500,22" fill="#000" opacity="0.200" transform="translate(0,2)"/><polygon points="42.500,7 46.500,2 77.500,2 77.500,20 75.500,22 42.500,22" fill="#6e5c26"/><polygon points="43.500,7.400 47,3 62,3 62,21 43.500,21" fill="#84703c"/><polygon points="62,3 76.500,3 76.500,19.600 75,21 62,21" fill="#b9a560"/><rect x="53.500" y="2" width="18.500" height="2.300" fill="#5e4e20"/><text x="48" y="16.600" font-size="10" font-weight="bold" fill="#fff" font-family="Liberation Sans,sans-serif" textLength="9.500" lengthAdjust="spacingAndGlyphs">FX</text><path d="M67.300 10.300A3.400 3.400 0 1 0 71.700 10.300" fill="none" stroke="#66561e" stroke-width="1.100"/><path d="M69.500 8.300v4.200" stroke="#66561e" stroke-width="1.100"/><polygon points="85.500,7 89.500,2 125.500,2 125.500,22 85.500,22" fill="#000" opacity="0.200" transform="translate(0,2)"/><polygon points="85.500,7 89.500,2 125.500,2 125.500,22 85.500,22" fill="#8c7a30"/><polygon points="86.500,7.400 90,3 124.500,3 124.500,21 86.500,21" fill="#b9a552"/><rect x="98.700" y="2" width="18.600" height="2.300" fill="#857432"/><path d="M90.600 16.500l5.200-5.400 3.700 5.400" fill="none" stroke="#4e4014" stroke-width="1.100"/><g shape-rendering="crispEdges" fill="#4e4014"><rect x="89" y="15" width="3" height="3"/><rect x="94" y="10" width="3" height="3"/><rect x="98" y="15" width="3" height="3"/></g><text x="104.500" y="17.300" font-size="12" fill="#66561e" font-family="Liberation Sans,sans-serif" textLength="17.200" lengthAdjust="spacingAndGlyphs">trim</text><ellipse cx="143" cy="15" rx="9.500" ry="8.500" fill="#000" opacity="0.220"/><circle cx="143" cy="11.900" r="9.800" fill="#a8985c"/><circle cx="143" cy="11.800" r="8.900" fill="#e2dabc"/><rect x="143" y="6" width="1" height="5.500" fill="#6a6040"/></svg></div><div class="a t2" style="left:0;top:0"><div class="a" style="left:40px;top:523px;width:366px;height:210px;background:#c4ae38;box-shadow:inset -1px -1px 0 #ceb940,inset 0 1px 0 #ceb940"></div><div class="box" style="left:46px;top:529px;width:190px;height:22px;border-radius:11px 0 0 11px"></div><div class="box" style="left:46px;top:556px;width:190px;height:22px"></div><svg class="a" style="left:42px;top:527px" width="28" height="30"><defs><linearGradient id="rgt2" x1="0" x2="0" y1="0" y2="1"><stop offset="0" stop-color="#b98078"/><stop offset="0.300" stop-color="#9a3c36"/><stop offset="0.600" stop-color="#8c2e2a"/><stop offset="1" stop-color="#741f1c"/></linearGradient></defs><ellipse cx="14" cy="23.800" rx="7" ry="2.200" fill="#000" opacity="0.150"/><circle cx="13.400" cy="12.900" r="10.300" fill="#0a0a0a"/><circle cx="13.900" cy="12.900" r="9.300" fill="url(#rgt2)"/><circle cx="14" cy="13" r="4" fill="none" stroke="#f6e4e2" stroke-width="2.300"/></svg><div class="a" style="left:70.5px;top:533px;font-size:11px;line-height:14px;color:#f0d254;white-space:nowrap;letter-spacing:0.331px">Fuel Renders</div><div class="a" style="left:51px;top:566px;width:180px;height:2px;background:#000"></div><div class="a" style="left:171px;top:575px;width:12px;height:5px;border-radius:50%;background:rgba(0,0,0,.28)"></div><div class="a" style="left:170px;top:559px;width:15px;height:15px;background:linear-gradient(90deg,#c4c4c4 0,#e4e4e4 3px,#fff 6.500px,#fff 7px,#111 7px,#111 8px,#f2f2f2 8px,#dcdcdc 11px,#cfcfcf 15px);border-radius:1.500px"></div><div class="slot" style="left:47px;top:585px"></div><div class="slot" style="left:47px;top:609px"></div><div class="slot" style="left:47px;top:633px"></div><div class="slot" style="left:47px;top:657px"></div><div class="slot" style="left:47px;top:681px"></div><div class="slot" style="left:47px;top:705px"></div><svg class="a" style="left:242px;top:555px" width="160" height="28"><polygon points="1,7 5,2 35,2 35,19.500 32.500,22 1,22" fill="#000" opacity="0.220" transform="translate(0,2)"/><polygon points="1,7 5,2 35,2 35,19.500 32.500,22 1,22" fill="#2b2b22"/><clipPath id="rct2"><polygon points="2,7.300 5.500,3 34,3 34,19 32,21 2,21"/></clipPath><g clip-path="url(#rct2)"><polygon points="5,22 9.500,2 14,2 9.500,22" fill="#2fe6b4"/><polygon points="11.500,22 16,2 20,2 15.500,22" fill="#6a5a22"/><polygon points="17.500,22 22,2 26,2 21.500,22" fill="#2b5868"/></g><text x="5.600" y="16.300" font-size="10.500" fill="#fff" stroke="#fff" stroke-width="0.250" font-family="Liberation Sans,sans-serif" textLength="25.500" lengthAdjust="spacingAndGlyphs">Route</text><polygon points="42.500,7 46.500,2 77.500,2 77.500,20 75.500,22 42.500,22" fill="#000" opacity="0.200" transform="translate(0,2)"/><polygon points="42.500,7 46.500,2 77.500,2 77.500,20 75.500,22 42.500,22" fill="#86782e"/><polygon points="43.500,7.400 47,3 62,3 62,21 43.500,21" fill="#9a8c4e"/><polygon points="62,3 76.500,3 76.500,19.600 75,21 62,21" fill="#cdbe6c"/><rect x="53.500" y="2" width="18.500" height="2.300" fill="#6e6228"/><text x="48" y="16.600" font-size="10" font-weight="bold" fill="#fff" font-family="Liberation Sans,sans-serif" textLength="9.500" lengthAdjust="spacingAndGlyphs">FX</text><path d="M67.300 10.300A3.400 3.400 0 1 0 71.700 10.300" fill="none" stroke="#6e6224" stroke-width="1.100"/><path d="M69.500 8.300v4.200" stroke="#6e6224" stroke-width="1.100"/><polygon points="85.500,7 89.500,2 125.500,2 125.500,22 85.500,22" fill="#000" opacity="0.200" transform="translate(0,2)"/><polygon points="85.500,7 89.500,2 125.500,2 125.500,22 85.500,22" fill="#a4963c"/><polygon points="86.500,7.400 90,3 124.500,3 124.500,21 86.500,21" fill="#cfc066"/><rect x="98.700" y="2" width="18.600" height="2.300" fill="#9c8e3c"/><path d="M90.600 16.500l5.200-5.400 3.700 5.400" fill="none" stroke="#4e4014" stroke-width="1.100"/><g shape-rendering="crispEdges" fill="#4e4014"><rect x="89" y="15" width="3" height="3"/><rect x="94" y="10" width="3" height="3"/><rect x="98" y="15" width="3" height="3"/></g><text x="104.500" y="17.300" font-size="12" fill="#6e6224" font-family="Liberation Sans,sans-serif" textLength="17.200" lengthAdjust="spacingAndGlyphs">trim</text><ellipse cx="143" cy="15" rx="9.500" ry="8.500" fill="#000" opacity="0.220"/><circle cx="143" cy="11.900" r="9.800" fill="#a8985c"/><circle cx="143" cy="11.800" r="8.900" fill="#e2dabc"/><rect x="143" y="6" width="1" height="5.500" fill="#6a6040"/></svg></div><div class="a" style="left:0;top:322px;width:16px;height:200px;border-radius:8px 8px 0 0;background:linear-gradient(90deg,#8e700f,#a68416 30%,#a68416)"></div><svg class="a" style="left:0;top:306px" width="18" height="16"><circle cx="8" cy="8" r="6" fill="#d0d0d0"/><polygon points="4.500,6 11.500,6 8,11" fill="#000"/></svg><div class="a" style="left:4.500px;top:416.500px;font-size:11px;line-height:14px;color:#2e2206">1</div><svg class="a" style="left:4px;top:513px" width="9" height="8"><path d="M0 0h3.500l1.500 2h3.500v5.500h-8.500z" fill="#8a6e14"/></svg><div class="a" style="left:20px;top:523px;width:16px;height:209px;border-radius:0 0 8px 8px;background:#c4ae38"></div><div class="a" style="left:24.500px;top:616.500px;font-size:11px;line-height:14px;color:#3a3008">2</div><svg class="a" style="left:24px;top:721px" width="9" height="8"><path d="M0 0h3.500l1.500 2h3.500v5.500h-8.500z" fill="#8e7f2c"/></svg><div class="a" style="left:406px;top:307px;width:42px;height:426px;background:#141414"></div><div class="btnms" style="left:423px;top:309.5px;color:#d47474">M</div><div class="btnms" style="left:423px;top:331.5px;color:#e8dc90">S</div><svg class="a" style="left:426px;top:500.8px" width="16" height="16"><circle cx="8" cy="8" r="7.200" fill="#0c0c0c"/><circle cx="8" cy="8" r="6.800" fill="#4c4c4c"/><ellipse cx="8" cy="8" rx="3.400" ry="3.200" fill="#555" stroke="#a6a6a6" stroke-width="1.700"/><path d="M4.200 11.800l7.800-7.800" stroke="#b4b4b4" stroke-width="1.600"/></svg><div class="btnms" style="left:423px;top:526px;color:#d47474">M</div><div class="btnms" style="left:423px;top:548px;color:#e8dc90">S</div><svg class="a" style="left:426px;top:712.5px" width="16" height="16"><circle cx="8" cy="8" r="7.200" fill="#0c0c0c"/><circle cx="8" cy="8" r="6.800" fill="#4c4c4c"/><ellipse cx="8" cy="8" rx="3.400" ry="3.200" fill="#555" stroke="#a6a6a6" stroke-width="1.700"/><path d="M4.200 11.800l7.800-7.800" stroke="#b4b4b4" stroke-width="1.600"/></svg></body></html>
